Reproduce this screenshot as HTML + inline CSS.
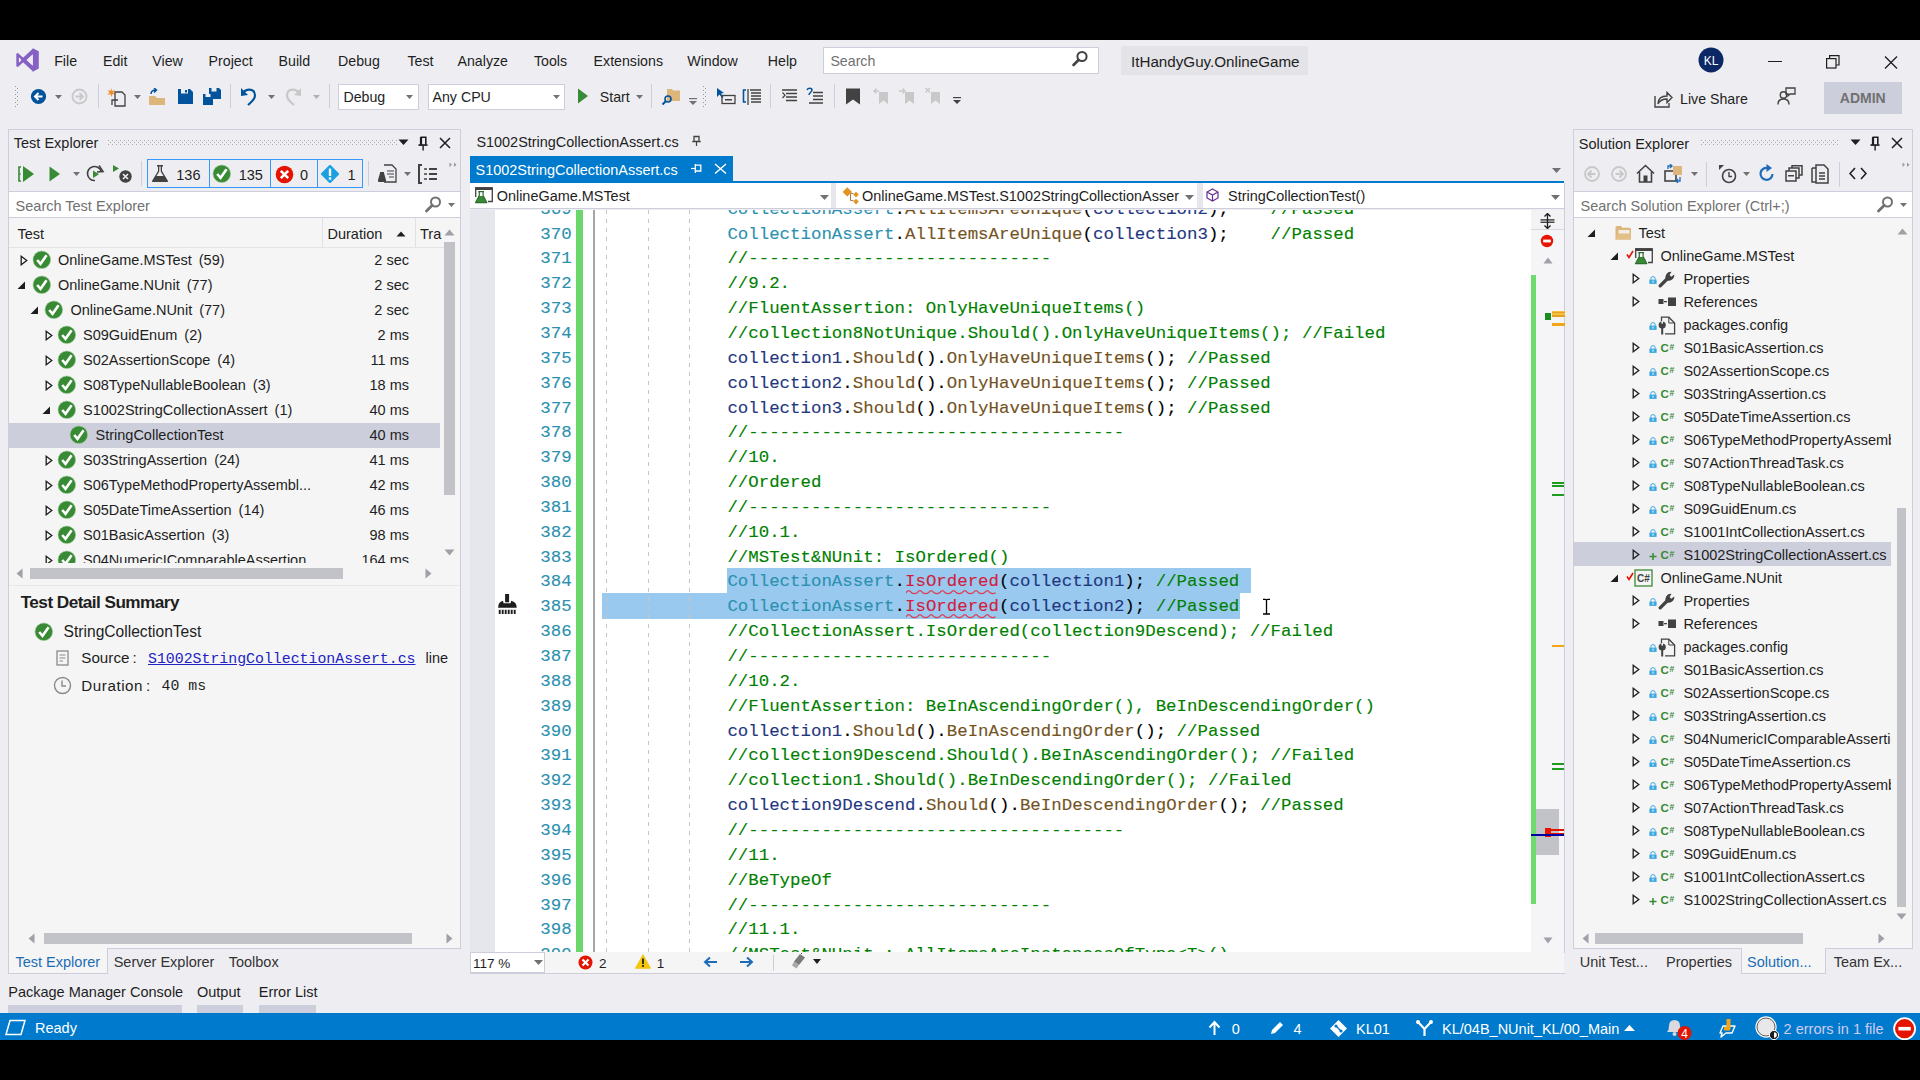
<!DOCTYPE html><html><head><meta charset="utf-8"><style>
html,body{margin:0;padding:0;width:1920px;height:1080px;overflow:hidden;background:#000}
body>div,body>svg{position:absolute}
.t{position:absolute;white-space:pre}
</style></head><body>
<div style="left:0px;top:0px;width:1920px;height:40px;background:#000;"></div>
<div style="left:0px;top:40px;width:1920px;height:973px;background:#EEEEF2;"></div>
<div style="left:0px;top:1013px;width:1920px;height:27px;background:#007ACC;"></div>
<div style="left:0px;top:1040px;width:1920px;height:40px;background:#000;"></div>
<svg style="position:absolute;left:8px;top:42px;" width="40" height="36" viewBox="0 0 40 36"><path d="M24.7 6.2 L30.8 9.2 V26.6 L24.7 29.8 Z" fill="#8661C5"/><path d="M26.5 8.2 L15.8 18 L26.5 27.8" fill="none" stroke="#8661C5" stroke-width="4.3"/><path d="M9.6 12.4 V23.6 L15.8 18 Z" fill="none" stroke="#8661C5" stroke-width="2.6" stroke-linejoin="round"/><path d="M24.8 12.2 V23.8 L18.5 18 Z" fill="#EEEEF2"/></svg>
<div class="t" style="left:54.2px;top:53.78px;font-size:14.2px;line-height:14.2px;color:#1E1E1E;font-family:'Liberation Sans', sans-serif;">File</div>
<div class="t" style="left:103px;top:53.78px;font-size:14.2px;line-height:14.2px;color:#1E1E1E;font-family:'Liberation Sans', sans-serif;">Edit</div>
<div class="t" style="left:152.3px;top:53.78px;font-size:14.2px;line-height:14.2px;color:#1E1E1E;font-family:'Liberation Sans', sans-serif;">View</div>
<div class="t" style="left:208.6px;top:53.78px;font-size:14.2px;line-height:14.2px;color:#1E1E1E;font-family:'Liberation Sans', sans-serif;">Project</div>
<div class="t" style="left:278.6px;top:53.78px;font-size:14.2px;line-height:14.2px;color:#1E1E1E;font-family:'Liberation Sans', sans-serif;">Build</div>
<div class="t" style="left:338px;top:53.78px;font-size:14.2px;line-height:14.2px;color:#1E1E1E;font-family:'Liberation Sans', sans-serif;">Debug</div>
<div class="t" style="left:407.5px;top:53.78px;font-size:14.2px;line-height:14.2px;color:#1E1E1E;font-family:'Liberation Sans', sans-serif;">Test</div>
<div class="t" style="left:457.5px;top:53.78px;font-size:14.2px;line-height:14.2px;color:#1E1E1E;font-family:'Liberation Sans', sans-serif;">Analyze</div>
<div class="t" style="left:534px;top:53.78px;font-size:14.2px;line-height:14.2px;color:#1E1E1E;font-family:'Liberation Sans', sans-serif;">Tools</div>
<div class="t" style="left:593.6px;top:53.78px;font-size:14.2px;line-height:14.2px;color:#1E1E1E;font-family:'Liberation Sans', sans-serif;">Extensions</div>
<div class="t" style="left:687.3px;top:53.78px;font-size:14.2px;line-height:14.2px;color:#1E1E1E;font-family:'Liberation Sans', sans-serif;">Window</div>
<div class="t" style="left:767.8px;top:53.78px;font-size:14.2px;line-height:14.2px;color:#1E1E1E;font-family:'Liberation Sans', sans-serif;">Help</div>
<div style="left:823px;top:46.5px;width:276px;height:27px;background:#FFFFFF;border:1px solid #CCCEDB;box-sizing:border-box;"></div>
<div class="t" style="left:830.4px;top:53.78px;font-size:14.2px;line-height:14.2px;color:#717171;font-family:'Liberation Sans', sans-serif;">Search</div>
<svg style="position:absolute;left:1071px;top:50px;" width="18" height="18" viewBox="0 0 18 18"><circle cx="11" cy="6.5" r="4.6" fill="none" stroke="#424242" stroke-width="2"/><path d="M7.8 9.8 L2.5 15" stroke="#424242" stroke-width="2.6" stroke-linecap="round"/></svg>
<div style="left:1121px;top:46px;width:187px;height:29px;background:#E3E3E8;"></div>
<div class="t" style="left:1131px;top:54.43px;font-size:15.2px;line-height:15.2px;color:#1E1E1E;font-family:'Liberation Sans', sans-serif;">ItHandyGuy.OnlineGame</div>
<svg style="position:absolute;left:1698px;top:47px;" width="26" height="26" viewBox="0 0 26 26"><circle cx="13" cy="13" r="12.5" fill="#0B2765"/><text x="13" y="17.5" font-family="Liberation Sans" font-size="12" fill="#fff" text-anchor="middle">KL</text></svg>
<div style="left:1768px;top:60.5px;width:14px;height:1.3px;background:#1E1E1E;"></div>
<svg style="position:absolute;left:1826px;top:55px;" width="15" height="14" viewBox="0 0 15 14"><rect x="0.6" y="3.6" width="9.4" height="9.4" fill="none" stroke="#1E1E1E" stroke-width="1.2"/><path d="M3.6 3.6 V0.6 H13 V10 H10" fill="none" stroke="#1E1E1E" stroke-width="1.2"/></svg>
<svg style="position:absolute;left:1884px;top:56px;" width="14" height="13" viewBox="0 0 14 13"><path d="M1 0.5 L13 12.5 M13 0.5 L1 12.5" stroke="#1E1E1E" stroke-width="1.3"/></svg>
<svg style="position:absolute;left:15px;top:86px;" width="4" height="22" viewBox="0 0 4 22"><rect x="0" y="0" width="1" height="1" fill="#999"/><rect x="2" y="2" width="1" height="1" fill="#999"/><rect x="0" y="4" width="1" height="1" fill="#999"/><rect x="2" y="6" width="1" height="1" fill="#999"/><rect x="0" y="8" width="1" height="1" fill="#999"/><rect x="2" y="10" width="1" height="1" fill="#999"/><rect x="0" y="12" width="1" height="1" fill="#999"/><rect x="2" y="14" width="1" height="1" fill="#999"/><rect x="0" y="16" width="1" height="1" fill="#999"/><rect x="2" y="18" width="1" height="1" fill="#999"/><rect x="0" y="20" width="1" height="1" fill="#999"/><rect x="2" y="22" width="1" height="1" fill="#999"/></svg>
<svg style="position:absolute;left:30px;top:88px;" width="17" height="17" viewBox="0 0 17 17"><circle cx="8.5" cy="8.5" r="7.6" fill="#00539C"/><path d="M12.5 8.5 H5.5 M8.5 5 L5 8.5 L8.5 12" fill="none" stroke="#fff" stroke-width="2"/></svg>
<svg style="position:absolute;left:55.1px;top:94.5px;" width="7" height="4" viewBox="0 0 7 4"><path d="M0 0 H7 L3.5 4 Z" fill="#717171"/></svg>
<svg style="position:absolute;left:71px;top:88px;" width="17" height="17" viewBox="0 0 17 17"><circle cx="8.5" cy="8.5" r="7" fill="none" stroke="#C8C8C8" stroke-width="1.8"/><path d="M4.5 8.5 H11.5 M8.5 5 L12 8.5 L8.5 12" fill="none" stroke="#C8C8C8" stroke-width="1.8"/></svg>
<div style="left:97.5px;top:84px;width:1px;height:24px;background:#CCCEDB;"></div>
<svg style="position:absolute;left:107px;top:87px;" width="20" height="20" viewBox="0 0 20 20"><path d="M4 1 L5 4 L8 3 L6 5.5 L8.5 7.5 L5.5 7 L4.5 10 L3.5 7 L0.5 8 L2.5 5.5 L0.5 3 L3.5 4 Z" fill="#F08A24"/><path d="M8 5 H15 L18 8 V19 H8 Z" fill="none" stroke="#424242" stroke-width="1.3"/><path d="M11 13 H5 V18" fill="none" stroke="#424242" stroke-width="1.3"/></svg>
<svg style="position:absolute;left:134.0px;top:94.5px;" width="7" height="4" viewBox="0 0 7 4"><path d="M0 0 H7 L3.5 4 Z" fill="#717171"/></svg>
<svg style="position:absolute;left:148px;top:88px;" width="19" height="18" viewBox="0 0 19 18"><path d="M1 8 H7 L9 10 H17 V17 H1 Z" fill="#DCB67A"/><path d="M3 6 C3 3 5 2 8 2 M6 0 L8.5 2 L6 4.5" fill="none" stroke="#00539C" stroke-width="1.5"/></svg>
<svg style="position:absolute;left:177px;top:88px;" width="17" height="17" viewBox="0 0 17 17"><path d="M1 1 H13 L16 4 V16 H1 Z" fill="#00539C"/><rect x="4" y="1" width="7" height="4.5" fill="#EEEEF2"/><rect x="8" y="2" width="2" height="2.5" fill="#00539C"/></svg>
<svg style="position:absolute;left:202px;top:87px;" width="20" height="19" viewBox="0 0 20 19"><path d="M7 1 H17 L19 3 V12 H7 Z" fill="#00539C"/><rect x="9.5" y="1" width="5" height="3.5" fill="#EEEEF2"/><path d="M1 7 H9 L11 9 V18 H1 Z" fill="#00539C"/><rect x="3.5" y="7" width="5" height="3" fill="#EEEEF2"/></svg>
<div style="left:230px;top:84px;width:1px;height:24px;background:#CCCEDB;"></div>
<svg style="position:absolute;left:240px;top:87px;" width="18" height="19" viewBox="0 0 18 19"><path d="M4 4.5 C8 1.5 15 2 15 8.5 C15 13 11 15 8 18" fill="none" stroke="#00539C" stroke-width="2.2"/><path d="M1 1 L1 9 L8 8 Z" fill="#00539C"/></svg>
<svg style="position:absolute;left:268.0px;top:94.5px;" width="7" height="4" viewBox="0 0 7 4"><path d="M0 0 H7 L3.5 4 Z" fill="#717171"/></svg>
<svg style="position:absolute;left:284px;top:87px;" width="18" height="19" viewBox="0 0 18 19"><path d="M14 4.5 C10 1.5 3 2 3 8.5 C3 13 7 15 10 18" fill="none" stroke="#C8C8C8" stroke-width="2.2"/><path d="M17 1 L17 9 L10 8 Z" fill="#C8C8C8"/></svg>
<svg style="position:absolute;left:313.0px;top:94.5px;" width="7" height="4" viewBox="0 0 7 4"><path d="M0 0 H7 L3.5 4 Z" fill="#B0B0B0"/></svg>
<div style="left:328.5px;top:84px;width:1px;height:24px;background:#CCCEDB;"></div>
<div style="left:338px;top:83.5px;width:81px;height:26px;background:#FFFFFF;border:1px solid #CCCEDB;box-sizing:border-box;"></div>
<div class="t" style="left:343.4px;top:89.68px;font-size:14.2px;line-height:14.2px;color:#1E1E1E;font-family:'Liberation Sans', sans-serif;">Debug</div>
<svg style="position:absolute;left:406.3px;top:94.5px;" width="7" height="4" viewBox="0 0 7 4"><path d="M0 0 H7 L3.5 4 Z" fill="#717171"/></svg>
<div style="left:427.5px;top:83.5px;width:137.5px;height:26px;background:#FFFFFF;border:1px solid #CCCEDB;box-sizing:border-box;"></div>
<div class="t" style="left:432.5px;top:89.68px;font-size:14.2px;line-height:14.2px;color:#1E1E1E;font-family:'Liberation Sans', sans-serif;">Any CPU</div>
<svg style="position:absolute;left:552.5px;top:94.5px;" width="7" height="4" viewBox="0 0 7 4"><path d="M0 0 H7 L3.5 4 Z" fill="#717171"/></svg>
<svg style="position:absolute;left:577px;top:88px;" width="12" height="16" viewBox="0 0 12 16"><path d="M1 0.5 L11 8 L1 15.5 Z" fill="#388A34"/></svg>
<div class="t" style="left:599.8px;top:89.68px;font-size:14.2px;line-height:14.2px;color:#1E1E1E;font-family:'Liberation Sans', sans-serif;">Start</div>
<svg style="position:absolute;left:636.2px;top:94.5px;" width="7" height="4" viewBox="0 0 7 4"><path d="M0 0 H7 L3.5 4 Z" fill="#717171"/></svg>
<div style="left:651.3px;top:84px;width:1px;height:24px;background:#CCCEDB;"></div>
<svg style="position:absolute;left:661px;top:87px;" width="20" height="19" viewBox="0 0 20 19"><path d="M6 2 H11 L12 3.5 H19 V14 H6 Z" fill="#DCB67A"/><circle cx="7" cy="12" r="3" fill="none" stroke="#00539C" stroke-width="1.6"/><path d="M5 14 L1.5 17.5" stroke="#00539C" stroke-width="2"/></svg>
<svg style="position:absolute;left:688px;top:98px;" width="10" height="10" viewBox="0 0 10 10"><rect x="1" y="0" width="8" height="1.2" fill="#717171"/><path d="M1 3 H9 L5 7 Z" fill="#717171"/></svg>
<svg style="position:absolute;left:703px;top:86px;" width="4" height="22" viewBox="0 0 4 22"><rect x="0" y="0" width="1" height="1" fill="#999"/><rect x="2" y="2" width="1" height="1" fill="#999"/><rect x="0" y="4" width="1" height="1" fill="#999"/><rect x="2" y="6" width="1" height="1" fill="#999"/><rect x="0" y="8" width="1" height="1" fill="#999"/><rect x="2" y="10" width="1" height="1" fill="#999"/><rect x="0" y="12" width="1" height="1" fill="#999"/><rect x="2" y="14" width="1" height="1" fill="#999"/><rect x="0" y="16" width="1" height="1" fill="#999"/><rect x="2" y="18" width="1" height="1" fill="#999"/><rect x="0" y="20" width="1" height="1" fill="#999"/><rect x="2" y="22" width="1" height="1" fill="#999"/></svg>
<svg style="position:absolute;left:716px;top:87px;" width="20" height="19" viewBox="0 0 20 19"><path d="M1 1 L1 10 L3.5 7.5 L6 11 L7.5 10 L5 6.5 L8 6 Z" fill="#00539C"/><rect x="6" y="8.5" width="13" height="8" fill="none" stroke="#424242" stroke-width="1.3"/><rect x="9" y="12" width="7" height="1.5" fill="#424242"/></svg>
<svg style="position:absolute;left:742px;top:87px;" width="20" height="19" viewBox="0 0 20 19"><path d="M4 3 H1.5 V15 H4" fill="none" stroke="#00539C" stroke-width="1.6"/><path d="M6 2 V18" stroke="#424242" stroke-width="1.3"/><path d="M8 3 H19 M9 6 H19 M9 9 H19 M9 12 H19 M9 15 H19" stroke="#424242" stroke-width="1.3"/></svg>
<div style="left:770px;top:84px;width:1px;height:24px;background:#CCCEDB;"></div>
<svg style="position:absolute;left:782px;top:88px;" width="16" height="16" viewBox="0 0 16 16"><path d="M0 2 H15 M4 5.5 H15 M4 9 H15 M4 12.5 H15" stroke="#424242" stroke-width="1.4"/><path d="M0.5 4.5 L3 7.2 L0.5 10" fill="none" stroke="#424242" stroke-width="1.2"/></svg>
<svg style="position:absolute;left:806px;top:87px;" width="18" height="18" viewBox="0 0 18 18"><path d="M7 5.5 H17 M7 9 H17 M7 12.5 H17 M3 16 H17" stroke="#424242" stroke-width="1.4"/><path d="M1 3 C2 0.5 6 0.5 6 3 C6 5 3 5.5 3 8" fill="none" stroke="#00539C" stroke-width="1.5"/></svg>
<div style="left:834px;top:84px;width:1px;height:24px;background:#CCCEDB;"></div>
<svg style="position:absolute;left:845px;top:88px;" width="16" height="17" viewBox="0 0 16 17"><path d="M1 0.5 H15 V16.5 L8 11.5 L1 16.5 Z" fill="#424242"/></svg>
<svg style="position:absolute;left:873px;top:87px;" width="16" height="18" viewBox="0 0 16 18"><path d="M6 5 H15 V17 L10.5 13.5 L6 17 Z" fill="#C8C8C8"/><path d="M1 4 H6 M3.5 1.5 L1 4 L3.5 6.5" fill="none" stroke="#C8C8C8" stroke-width="1.4"/></svg>
<svg style="position:absolute;left:899px;top:87px;" width="17" height="18" viewBox="0 0 17 18"><path d="M6 5 H15 V17 L10.5 13.5 L6 17 Z" fill="#C8C8C8"/><path d="M0 4 H6 M3.5 1.5 L6 4 L3.5 6.5" fill="none" stroke="#C8C8C8" stroke-width="1.4"/></svg>
<svg style="position:absolute;left:925px;top:87px;" width="17" height="18" viewBox="0 0 17 18"><path d="M6 5 H15 V17 L10.5 13.5 L6 17 Z" fill="#C8C8C8"/><path d="M0.5 1 L5 5.5 M5 1 L0.5 5.5" fill="none" stroke="#C8C8C8" stroke-width="1.4"/></svg>
<svg style="position:absolute;left:952px;top:97px;" width="10" height="10" viewBox="0 0 10 10"><rect x="1" y="0" width="8" height="1.2" fill="#424242"/><path d="M1 3 H9 L5 7 Z" fill="#424242"/></svg>
<svg style="position:absolute;left:1654px;top:90px;" width="19" height="18" viewBox="0 0 19 18"><path d="M1 6 V17 H15 V13" fill="none" stroke="#424242" stroke-width="1.4"/><path d="M4 14 C4 8 8 6 13 6 V2.5 L18 7.5 L13 12.5 V9 C9 9 6 10 4 14 Z" fill="none" stroke="#424242" stroke-width="1.4"/></svg>
<div class="t" style="left:1680px;top:91.68px;font-size:14.2px;line-height:14.2px;color:#1E1E1E;font-family:'Liberation Sans', sans-serif;">Live Share</div>
<svg style="position:absolute;left:1777px;top:87px;" width="19" height="19" viewBox="0 0 19 19"><circle cx="6.5" cy="8" r="3.2" fill="none" stroke="#424242" stroke-width="1.4"/><path d="M1 17.5 C1 13 4 12 6.5 12 C9 12 12 13 12 17.5" fill="none" stroke="#424242" stroke-width="1.4"/><path d="M9 1 H18 V7 H13 L11 9 V7 H9 Z" fill="none" stroke="#424242" stroke-width="1.3"/></svg>
<div style="left:1824px;top:82.3px;width:78px;height:31.3px;background:#CCCEDB;"></div>
<div class="t" style="left:1839.8px;top:91.35px;font-size:14px;line-height:14px;color:#717171;font-family:'Liberation Sans', sans-serif;font-weight:bold">ADMIN</div>
<div style="left:8px;top:129px;width:453px;height:820px;background:#F5F5F5;border:1px solid #CCCEDB;box-sizing:border-box;"></div>
<div style="left:9px;top:130px;width:451px;height:61px;background:#EEEEF2;"></div>
<div class="t" style="left:13.8px;top:136.43px;font-size:14.5px;line-height:14.5px;color:#1E1E1E;font-family:'Liberation Sans', sans-serif;">Test Explorer</div>
<svg style="position:absolute;left:107.5px;top:140px;" width="290" height="5" viewBox="0 0 290 5"><rect x="0" y="0" width="1" height="1" fill="#A8A8B0"/><rect x="2" y="2" width="1" height="1" fill="#A8A8B0"/><rect x="0" y="4" width="1" height="1" fill="#A8A8B0"/><rect x="4" y="0" width="1" height="1" fill="#A8A8B0"/><rect x="6" y="2" width="1" height="1" fill="#A8A8B0"/><rect x="4" y="4" width="1" height="1" fill="#A8A8B0"/><rect x="8" y="0" width="1" height="1" fill="#A8A8B0"/><rect x="10" y="2" width="1" height="1" fill="#A8A8B0"/><rect x="8" y="4" width="1" height="1" fill="#A8A8B0"/><rect x="12" y="0" width="1" height="1" fill="#A8A8B0"/><rect x="14" y="2" width="1" height="1" fill="#A8A8B0"/><rect x="12" y="4" width="1" height="1" fill="#A8A8B0"/><rect x="16" y="0" width="1" height="1" fill="#A8A8B0"/><rect x="18" y="2" width="1" height="1" fill="#A8A8B0"/><rect x="16" y="4" width="1" height="1" fill="#A8A8B0"/><rect x="20" y="0" width="1" height="1" fill="#A8A8B0"/><rect x="22" y="2" width="1" height="1" fill="#A8A8B0"/><rect x="20" y="4" width="1" height="1" fill="#A8A8B0"/><rect x="24" y="0" width="1" height="1" fill="#A8A8B0"/><rect x="26" y="2" width="1" height="1" fill="#A8A8B0"/><rect x="24" y="4" width="1" height="1" fill="#A8A8B0"/><rect x="28" y="0" width="1" height="1" fill="#A8A8B0"/><rect x="30" y="2" width="1" height="1" fill="#A8A8B0"/><rect x="28" y="4" width="1" height="1" fill="#A8A8B0"/><rect x="32" y="0" width="1" height="1" fill="#A8A8B0"/><rect x="34" y="2" width="1" height="1" fill="#A8A8B0"/><rect x="32" y="4" width="1" height="1" fill="#A8A8B0"/><rect x="36" y="0" width="1" height="1" fill="#A8A8B0"/><rect x="38" y="2" width="1" height="1" fill="#A8A8B0"/><rect x="36" y="4" width="1" height="1" fill="#A8A8B0"/><rect x="40" y="0" width="1" height="1" fill="#A8A8B0"/><rect x="42" y="2" width="1" height="1" fill="#A8A8B0"/><rect x="40" y="4" width="1" height="1" fill="#A8A8B0"/><rect x="44" y="0" width="1" height="1" fill="#A8A8B0"/><rect x="46" y="2" width="1" height="1" fill="#A8A8B0"/><rect x="44" y="4" width="1" height="1" fill="#A8A8B0"/><rect x="48" y="0" width="1" height="1" fill="#A8A8B0"/><rect x="50" y="2" width="1" height="1" fill="#A8A8B0"/><rect x="48" y="4" width="1" height="1" fill="#A8A8B0"/><rect x="52" y="0" width="1" height="1" fill="#A8A8B0"/><rect x="54" y="2" width="1" height="1" fill="#A8A8B0"/><rect x="52" y="4" width="1" height="1" fill="#A8A8B0"/><rect x="56" y="0" width="1" height="1" fill="#A8A8B0"/><rect x="58" y="2" width="1" height="1" fill="#A8A8B0"/><rect x="56" y="4" width="1" height="1" fill="#A8A8B0"/><rect x="60" y="0" width="1" height="1" fill="#A8A8B0"/><rect x="62" y="2" width="1" height="1" fill="#A8A8B0"/><rect x="60" y="4" width="1" height="1" fill="#A8A8B0"/><rect x="64" y="0" width="1" height="1" fill="#A8A8B0"/><rect x="66" y="2" width="1" height="1" fill="#A8A8B0"/><rect x="64" y="4" width="1" height="1" fill="#A8A8B0"/><rect x="68" y="0" width="1" height="1" fill="#A8A8B0"/><rect x="70" y="2" width="1" height="1" fill="#A8A8B0"/><rect x="68" y="4" width="1" height="1" fill="#A8A8B0"/><rect x="72" y="0" width="1" height="1" fill="#A8A8B0"/><rect x="74" y="2" width="1" height="1" fill="#A8A8B0"/><rect x="72" y="4" width="1" height="1" fill="#A8A8B0"/><rect x="76" y="0" width="1" height="1" fill="#A8A8B0"/><rect x="78" y="2" width="1" height="1" fill="#A8A8B0"/><rect x="76" y="4" width="1" height="1" fill="#A8A8B0"/><rect x="80" y="0" width="1" height="1" fill="#A8A8B0"/><rect x="82" y="2" width="1" height="1" fill="#A8A8B0"/><rect x="80" y="4" width="1" height="1" fill="#A8A8B0"/><rect x="84" y="0" width="1" height="1" fill="#A8A8B0"/><rect x="86" y="2" width="1" height="1" fill="#A8A8B0"/><rect x="84" y="4" width="1" height="1" fill="#A8A8B0"/><rect x="88" y="0" width="1" height="1" fill="#A8A8B0"/><rect x="90" y="2" width="1" height="1" fill="#A8A8B0"/><rect x="88" y="4" width="1" height="1" fill="#A8A8B0"/><rect x="92" y="0" width="1" height="1" fill="#A8A8B0"/><rect x="94" y="2" width="1" height="1" fill="#A8A8B0"/><rect x="92" y="4" width="1" height="1" fill="#A8A8B0"/><rect x="96" y="0" width="1" height="1" fill="#A8A8B0"/><rect x="98" y="2" width="1" height="1" fill="#A8A8B0"/><rect x="96" y="4" width="1" height="1" fill="#A8A8B0"/><rect x="100" y="0" width="1" height="1" fill="#A8A8B0"/><rect x="102" y="2" width="1" height="1" fill="#A8A8B0"/><rect x="100" y="4" width="1" height="1" fill="#A8A8B0"/><rect x="104" y="0" width="1" height="1" fill="#A8A8B0"/><rect x="106" y="2" width="1" height="1" fill="#A8A8B0"/><rect x="104" y="4" width="1" height="1" fill="#A8A8B0"/><rect x="108" y="0" width="1" height="1" fill="#A8A8B0"/><rect x="110" y="2" width="1" height="1" fill="#A8A8B0"/><rect x="108" y="4" width="1" height="1" fill="#A8A8B0"/><rect x="112" y="0" width="1" height="1" fill="#A8A8B0"/><rect x="114" y="2" width="1" height="1" fill="#A8A8B0"/><rect x="112" y="4" width="1" height="1" fill="#A8A8B0"/><rect x="116" y="0" width="1" height="1" fill="#A8A8B0"/><rect x="118" y="2" width="1" height="1" fill="#A8A8B0"/><rect x="116" y="4" width="1" height="1" fill="#A8A8B0"/><rect x="120" y="0" width="1" height="1" fill="#A8A8B0"/><rect x="122" y="2" width="1" height="1" fill="#A8A8B0"/><rect x="120" y="4" width="1" height="1" fill="#A8A8B0"/><rect x="124" y="0" width="1" height="1" fill="#A8A8B0"/><rect x="126" y="2" width="1" height="1" fill="#A8A8B0"/><rect x="124" y="4" width="1" height="1" fill="#A8A8B0"/><rect x="128" y="0" width="1" height="1" fill="#A8A8B0"/><rect x="130" y="2" width="1" height="1" fill="#A8A8B0"/><rect x="128" y="4" width="1" height="1" fill="#A8A8B0"/><rect x="132" y="0" width="1" height="1" fill="#A8A8B0"/><rect x="134" y="2" width="1" height="1" fill="#A8A8B0"/><rect x="132" y="4" width="1" height="1" fill="#A8A8B0"/><rect x="136" y="0" width="1" height="1" fill="#A8A8B0"/><rect x="138" y="2" width="1" height="1" fill="#A8A8B0"/><rect x="136" y="4" width="1" height="1" fill="#A8A8B0"/><rect x="140" y="0" width="1" height="1" fill="#A8A8B0"/><rect x="142" y="2" width="1" height="1" fill="#A8A8B0"/><rect x="140" y="4" width="1" height="1" fill="#A8A8B0"/><rect x="144" y="0" width="1" height="1" fill="#A8A8B0"/><rect x="146" y="2" width="1" height="1" fill="#A8A8B0"/><rect x="144" y="4" width="1" height="1" fill="#A8A8B0"/><rect x="148" y="0" width="1" height="1" fill="#A8A8B0"/><rect x="150" y="2" width="1" height="1" fill="#A8A8B0"/><rect x="148" y="4" width="1" height="1" fill="#A8A8B0"/><rect x="152" y="0" width="1" height="1" fill="#A8A8B0"/><rect x="154" y="2" width="1" height="1" fill="#A8A8B0"/><rect x="152" y="4" width="1" height="1" fill="#A8A8B0"/><rect x="156" y="0" width="1" height="1" fill="#A8A8B0"/><rect x="158" y="2" width="1" height="1" fill="#A8A8B0"/><rect x="156" y="4" width="1" height="1" fill="#A8A8B0"/><rect x="160" y="0" width="1" height="1" fill="#A8A8B0"/><rect x="162" y="2" width="1" height="1" fill="#A8A8B0"/><rect x="160" y="4" width="1" height="1" fill="#A8A8B0"/><rect x="164" y="0" width="1" height="1" fill="#A8A8B0"/><rect x="166" y="2" width="1" height="1" fill="#A8A8B0"/><rect x="164" y="4" width="1" height="1" fill="#A8A8B0"/><rect x="168" y="0" width="1" height="1" fill="#A8A8B0"/><rect x="170" y="2" width="1" height="1" fill="#A8A8B0"/><rect x="168" y="4" width="1" height="1" fill="#A8A8B0"/><rect x="172" y="0" width="1" height="1" fill="#A8A8B0"/><rect x="174" y="2" width="1" height="1" fill="#A8A8B0"/><rect x="172" y="4" width="1" height="1" fill="#A8A8B0"/><rect x="176" y="0" width="1" height="1" fill="#A8A8B0"/><rect x="178" y="2" width="1" height="1" fill="#A8A8B0"/><rect x="176" y="4" width="1" height="1" fill="#A8A8B0"/><rect x="180" y="0" width="1" height="1" fill="#A8A8B0"/><rect x="182" y="2" width="1" height="1" fill="#A8A8B0"/><rect x="180" y="4" width="1" height="1" fill="#A8A8B0"/><rect x="184" y="0" width="1" height="1" fill="#A8A8B0"/><rect x="186" y="2" width="1" height="1" fill="#A8A8B0"/><rect x="184" y="4" width="1" height="1" fill="#A8A8B0"/><rect x="188" y="0" width="1" height="1" fill="#A8A8B0"/><rect x="190" y="2" width="1" height="1" fill="#A8A8B0"/><rect x="188" y="4" width="1" height="1" fill="#A8A8B0"/><rect x="192" y="0" width="1" height="1" fill="#A8A8B0"/><rect x="194" y="2" width="1" height="1" fill="#A8A8B0"/><rect x="192" y="4" width="1" height="1" fill="#A8A8B0"/><rect x="196" y="0" width="1" height="1" fill="#A8A8B0"/><rect x="198" y="2" width="1" height="1" fill="#A8A8B0"/><rect x="196" y="4" width="1" height="1" fill="#A8A8B0"/><rect x="200" y="0" width="1" height="1" fill="#A8A8B0"/><rect x="202" y="2" width="1" height="1" fill="#A8A8B0"/><rect x="200" y="4" width="1" height="1" fill="#A8A8B0"/><rect x="204" y="0" width="1" height="1" fill="#A8A8B0"/><rect x="206" y="2" width="1" height="1" fill="#A8A8B0"/><rect x="204" y="4" width="1" height="1" fill="#A8A8B0"/><rect x="208" y="0" width="1" height="1" fill="#A8A8B0"/><rect x="210" y="2" width="1" height="1" fill="#A8A8B0"/><rect x="208" y="4" width="1" height="1" fill="#A8A8B0"/><rect x="212" y="0" width="1" height="1" fill="#A8A8B0"/><rect x="214" y="2" width="1" height="1" fill="#A8A8B0"/><rect x="212" y="4" width="1" height="1" fill="#A8A8B0"/><rect x="216" y="0" width="1" height="1" fill="#A8A8B0"/><rect x="218" y="2" width="1" height="1" fill="#A8A8B0"/><rect x="216" y="4" width="1" height="1" fill="#A8A8B0"/><rect x="220" y="0" width="1" height="1" fill="#A8A8B0"/><rect x="222" y="2" width="1" height="1" fill="#A8A8B0"/><rect x="220" y="4" width="1" height="1" fill="#A8A8B0"/><rect x="224" y="0" width="1" height="1" fill="#A8A8B0"/><rect x="226" y="2" width="1" height="1" fill="#A8A8B0"/><rect x="224" y="4" width="1" height="1" fill="#A8A8B0"/><rect x="228" y="0" width="1" height="1" fill="#A8A8B0"/><rect x="230" y="2" width="1" height="1" fill="#A8A8B0"/><rect x="228" y="4" width="1" height="1" fill="#A8A8B0"/><rect x="232" y="0" width="1" height="1" fill="#A8A8B0"/><rect x="234" y="2" width="1" height="1" fill="#A8A8B0"/><rect x="232" y="4" width="1" height="1" fill="#A8A8B0"/><rect x="236" y="0" width="1" height="1" fill="#A8A8B0"/><rect x="238" y="2" width="1" height="1" fill="#A8A8B0"/><rect x="236" y="4" width="1" height="1" fill="#A8A8B0"/><rect x="240" y="0" width="1" height="1" fill="#A8A8B0"/><rect x="242" y="2" width="1" height="1" fill="#A8A8B0"/><rect x="240" y="4" width="1" height="1" fill="#A8A8B0"/><rect x="244" y="0" width="1" height="1" fill="#A8A8B0"/><rect x="246" y="2" width="1" height="1" fill="#A8A8B0"/><rect x="244" y="4" width="1" height="1" fill="#A8A8B0"/><rect x="248" y="0" width="1" height="1" fill="#A8A8B0"/><rect x="250" y="2" width="1" height="1" fill="#A8A8B0"/><rect x="248" y="4" width="1" height="1" fill="#A8A8B0"/><rect x="252" y="0" width="1" height="1" fill="#A8A8B0"/><rect x="254" y="2" width="1" height="1" fill="#A8A8B0"/><rect x="252" y="4" width="1" height="1" fill="#A8A8B0"/><rect x="256" y="0" width="1" height="1" fill="#A8A8B0"/><rect x="258" y="2" width="1" height="1" fill="#A8A8B0"/><rect x="256" y="4" width="1" height="1" fill="#A8A8B0"/><rect x="260" y="0" width="1" height="1" fill="#A8A8B0"/><rect x="262" y="2" width="1" height="1" fill="#A8A8B0"/><rect x="260" y="4" width="1" height="1" fill="#A8A8B0"/><rect x="264" y="0" width="1" height="1" fill="#A8A8B0"/><rect x="266" y="2" width="1" height="1" fill="#A8A8B0"/><rect x="264" y="4" width="1" height="1" fill="#A8A8B0"/><rect x="268" y="0" width="1" height="1" fill="#A8A8B0"/><rect x="270" y="2" width="1" height="1" fill="#A8A8B0"/><rect x="268" y="4" width="1" height="1" fill="#A8A8B0"/><rect x="272" y="0" width="1" height="1" fill="#A8A8B0"/><rect x="274" y="2" width="1" height="1" fill="#A8A8B0"/><rect x="272" y="4" width="1" height="1" fill="#A8A8B0"/><rect x="276" y="0" width="1" height="1" fill="#A8A8B0"/><rect x="278" y="2" width="1" height="1" fill="#A8A8B0"/><rect x="276" y="4" width="1" height="1" fill="#A8A8B0"/><rect x="280" y="0" width="1" height="1" fill="#A8A8B0"/><rect x="282" y="2" width="1" height="1" fill="#A8A8B0"/><rect x="280" y="4" width="1" height="1" fill="#A8A8B0"/><rect x="284" y="0" width="1" height="1" fill="#A8A8B0"/><rect x="286" y="2" width="1" height="1" fill="#A8A8B0"/><rect x="284" y="4" width="1" height="1" fill="#A8A8B0"/><rect x="288" y="0" width="1" height="1" fill="#A8A8B0"/><rect x="290" y="2" width="1" height="1" fill="#A8A8B0"/><rect x="288" y="4" width="1" height="1" fill="#A8A8B0"/></svg>
<svg style="position:absolute;left:398px;top:139px;" width="11" height="7" viewBox="0 0 11 7"><path d="M0.5 0.5 H10.5 L5.5 6 Z" fill="#1E1E1E"/></svg>
<svg style="position:absolute;left:418px;top:136px;" width="10" height="15" viewBox="0 0 10 15"><path d="M2.6 1.2 H7.8 V8.4" fill="none" stroke="#1E1E1E" stroke-width="1.6"/><rect x="1.9" y="1" width="2.2" height="8" fill="#1E1E1E"/><rect x="0.5" y="8.2" width="9" height="1.7" fill="#1E1E1E"/><rect x="4.4" y="9.5" width="1.4" height="5" fill="#1E1E1E"/></svg>
<svg style="position:absolute;left:439px;top:137px;" width="12" height="12" viewBox="0 0 12 12"><path d="M1 1 L11 11 M11 1 L1 11" stroke="#1E1E1E" stroke-width="1.5"/></svg>
<svg style="position:absolute;left:18px;top:165px;" width="17" height="18" viewBox="0 0 17 18"><path d="M5 1 L16 9 L5 17 Z" fill="#388A34"/><path d="M3 2 L1 2 L1 16 L3 16" fill="none" stroke="#388A34" stroke-width="1.6"/><path d="M1 9 H3" stroke="#388A34" stroke-width="1"/></svg>
<svg style="position:absolute;left:49px;top:166px;" width="12" height="16" viewBox="0 0 12 16"><path d="M0.5 0.5 L11 8 L0.5 15.5 Z" fill="#388A34"/></svg>
<svg style="position:absolute;left:72.5px;top:171.5px;" width="7" height="4" viewBox="0 0 7 4"><path d="M0 0 H7 L3.5 4 Z" fill="#717171"/></svg>
<svg style="position:absolute;left:86px;top:164px;" width="19" height="19" viewBox="0 0 19 19"><path d="M15 7 A7 7 0 1 0 9 16.5" fill="none" stroke="#424242" stroke-width="1.6"/><path d="M13 1.5 L17 7.5 L11 8" fill="none" stroke="#424242" stroke-width="1.6"/><path d="M7 6.5 L13 10.2 L7 14 Z" fill="#388A34"/></svg>
<svg style="position:absolute;left:112px;top:164px;" width="21" height="20" viewBox="0 0 21 20"><path d="M1 1 L7 4.5 L1 8 Z" fill="#388A34"/><circle cx="13.5" cy="12.5" r="6.2" fill="#424242"/><path d="M11 10 L16 15 M16 10 L11 15" stroke="#EEEEF2" stroke-width="1.6"/></svg>
<div style="left:141px;top:161px;width:1px;height:25px;background:#CCCEDB;"></div>
<div style="left:147px;top:159px;width:216px;height:29px;background:transparent;border:1px solid #3399FF;box-sizing:border-box;"></div>
<div style="left:208.5px;top:159px;width:1.3px;height:29px;background:#3399FF;"></div>
<div style="left:270px;top:159px;width:1.3px;height:29px;background:#3399FF;"></div>
<div style="left:316.5px;top:159px;width:1.3px;height:29px;background:#3399FF;"></div>
<svg style="position:absolute;left:151px;top:164px;" width="18" height="19" viewBox="0 0 18 19"><path d="M6 1 H12 V2.5 H11 V7 L17 17 Q17.5 18 16 18 H2 Q0.5 18 1 17 L7 7 V2.5 H6 Z" fill="#424242"/><path d="M8.3 2.5 V7.5 L5.5 12 H12.5 L9.7 7.5 V2.5 Z" fill="#EEEEF2"/></svg>
<div class="t" style="left:176.3px;top:167.73px;font-size:14.5px;line-height:14.5px;color:#1E1E1E;font-family:'Liberation Sans', sans-serif;">136</div>
<svg style="position:absolute;left:212.1px;top:164.0px;" width="19.6" height="19.6" viewBox="0 0 19.6 19.6"><circle cx="9.8" cy="9.8" r="8.8" fill="#388A34" stroke="#9ACB98" stroke-width="0.6"/><path d="M5.200000000000001 10.0 L8.5 13.8 L14.600000000000001 5.300000000000001" fill="none" stroke="#fff" stroke-width="2.6" stroke-linejoin="miter"/></svg>
<div class="t" style="left:238.7px;top:167.73px;font-size:14.5px;line-height:14.5px;color:#1E1E1E;font-family:'Liberation Sans', sans-serif;">135</div>
<svg style="position:absolute;left:274.5px;top:164.5px;" width="19" height="19" viewBox="0 0 19 19"><circle cx="9.5" cy="9.5" r="8.8" fill="#E51400"/><path d="M5.8 5.8 L13.2 13.2 M13.2 5.8 L5.8 13.2" stroke="#fff" stroke-width="2.6"/></svg>
<div class="t" style="left:300px;top:167.73px;font-size:14.5px;line-height:14.5px;color:#1E1E1E;font-family:'Liberation Sans', sans-serif;">0</div>
<svg style="position:absolute;left:321px;top:165px;" width="18" height="18" viewBox="0 0 18 18"><path d="M9 0.5 L17.5 9 L9 17.5 L0.5 9 Z" fill="#1BA1E2" stroke="#1BA1E2" stroke-linejoin="round" stroke-width="1.5"/><rect x="7.8" y="3.6" width="2.4" height="7.4" fill="#fff"/><rect x="7.8" y="12.3" width="2.4" height="2.4" fill="#fff"/></svg>
<div class="t" style="left:347.5px;top:167.73px;font-size:14.5px;line-height:14.5px;color:#1E1E1E;font-family:'Liberation Sans', sans-serif;">1</div>
<div style="left:367.5px;top:161px;width:1px;height:25px;background:#CCCEDB;"></div>
<svg style="position:absolute;left:377px;top:164px;" width="21" height="20" viewBox="0 0 21 20"><path d="M7 1 H15 L19 5 V18 H7" fill="none" stroke="#424242" stroke-width="1.3"/><path d="M10 7 H17 M10 10 H17 M12 13 H17" stroke="#424242" stroke-width="1.2"/><path d="M3 8 H7 V9 L9 16 Q9.5 18 8 18 H2 Q0.5 18 1 16 L3 9 Z" fill="#424242"/></svg>
<svg style="position:absolute;left:404.0px;top:171.5px;" width="7" height="4" viewBox="0 0 7 4"><path d="M0 0 H7 L3.5 4 Z" fill="#717171"/></svg>
<svg style="position:absolute;left:418px;top:164px;" width="20" height="20" viewBox="0 0 20 20"><path d="M4 1 H1 V19 H4" fill="none" stroke="#424242" stroke-width="2"/><path d="M6 5 H9 M6 10 H9 M6 15 H9" stroke="#424242" stroke-width="1.6"/><path d="M11 5 H19 M11 10 H19 M11 15 H19" stroke="#424242" stroke-width="1.8"/></svg>
<svg style="position:absolute;left:448.5px;top:162px;" width="9" height="6" viewBox="0 0 9 6"><path d="M0.5 0.5 L3 2.75 L0.5 5 Z M5 0.5 L7.5 2.75 L5 5 Z" fill="#999999"/></svg>
<div style="left:9px;top:191px;width:451px;height:1px;background:#CCCEDB;"></div>
<div style="left:9px;top:192px;width:451px;height:25px;background:#FFFFFF;"></div>
<div style="left:9px;top:217px;width:451px;height:1px;background:#CCCEDB;"></div>
<div class="t" style="left:15.6px;top:199.03px;font-size:14.5px;line-height:14.5px;color:#717171;font-family:'Liberation Sans', sans-serif;">Search Test Explorer</div>
<svg style="position:absolute;left:424px;top:196px;" width="18" height="17" viewBox="0 0 18 17"><circle cx="11.5" cy="6" r="4.5" fill="none" stroke="#717171" stroke-width="2"/><path d="M8.3 9.3 L2.5 15" stroke="#717171" stroke-width="2.8" stroke-linecap="round"/></svg>
<svg style="position:absolute;left:448.0px;top:202.5px;" width="7" height="4" viewBox="0 0 7 4"><path d="M0 0 H7 L3.5 4 Z" fill="#717171"/></svg>
<div class="t" style="left:17.5px;top:227.13px;font-size:14.5px;line-height:14.5px;color:#1E1E1E;font-family:'Liberation Sans', sans-serif;">Test</div>
<div style="left:321.5px;top:218px;width:1px;height:29px;background:#E0E0E6;"></div>
<div class="t" style="left:327.5px;top:227.13px;font-size:14.5px;line-height:14.5px;color:#1E1E1E;font-family:'Liberation Sans', sans-serif;">Duration</div>
<svg style="position:absolute;left:395.5px;top:231px;" width="10" height="6" viewBox="0 0 10 6"><path d="M0.5 5.5 L5 0.5 L9.5 5.5 Z" fill="#1E1E1E"/></svg>
<div style="left:415px;top:218px;width:1px;height:29px;background:#E0E0E6;"></div>
<div class="t" style="left:420px;top:227.13px;font-size:14.5px;line-height:14.5px;color:#1E1E1E;font-family:'Liberation Sans', sans-serif;">Tra</div>
<div style="left:9px;top:247px;width:435px;height:1px;background:#E3E3E8;"></div>
<svg style="position:absolute;left:444px;top:229px;" width="11" height="7" viewBox="0 0 11 7"><path d="M0.5 6.5 L5.5 0.5 L10.5 6.5 Z" fill="#A0A0A8"/></svg>
<div style="left:444.2px;top:242px;width:10.8px;height:252.5px;background:#C2C3C9;"></div>
<svg style="position:absolute;left:444px;top:549px;" width="11" height="7" viewBox="0 0 11 7"><path d="M0.5 0.5 L5.5 6.5 L10.5 0.5 Z" fill="#A0A0A8"/></svg>
<div style="left:9px;top:248px;width:435px;height:315px;overflow:hidden">
<svg style="position:absolute;left:10.5px;top:6.5px" width="8" height="11"><path d="M1.2 1.2 L6.8 5.5 L1.2 9.8 Z" fill="none" stroke="#1E1E1E" stroke-width="1.3"/></svg>
<svg style="position:absolute;left:22.7px;top:2.1999999999999993px" width="19.6" height="19.6"><circle cx="9.8" cy="9.8" r="8.8" fill="#388A34" stroke="#9ACB98" stroke-width="0.6"/><path d="M5.200000000000001 10.0 L8.5 13.8 L14.600000000000001 5.300000000000001" fill="none" stroke="#fff" stroke-width="2.6"/></svg>
<div class="t" style="left:49.0px;top:5.33px;font-size:14.5px;line-height:14.5px;color:#1E1E1E;font-family:'Liberation Sans', sans-serif">OnlineGame.MSTest<span style="margin-left:7px">(59)</span></div>
<div class="t" style="left:300px;width:100px;text-align:right;top:5.33px;font-size:14.5px;line-height:14.5px;color:#1E1E1E;font-family:'Liberation Sans', sans-serif">2 sec</div>
<svg style="position:absolute;left:8.0px;top:33px" width="9" height="9"><path d="M8 0.5 V8 H0.5 Z" fill="#1E1E1E"/></svg>
<svg style="position:absolute;left:22.7px;top:27.2px" width="19.6" height="19.6"><circle cx="9.8" cy="9.8" r="8.8" fill="#388A34" stroke="#9ACB98" stroke-width="0.6"/><path d="M5.200000000000001 10.0 L8.5 13.8 L14.600000000000001 5.300000000000001" fill="none" stroke="#fff" stroke-width="2.6"/></svg>
<div class="t" style="left:49.0px;top:30.33px;font-size:14.5px;line-height:14.5px;color:#1E1E1E;font-family:'Liberation Sans', sans-serif">OnlineGame.NUnit<span style="margin-left:7px">(77)</span></div>
<div class="t" style="left:300px;width:100px;text-align:right;top:30.33px;font-size:14.5px;line-height:14.5px;color:#1E1E1E;font-family:'Liberation Sans', sans-serif">2 sec</div>
<svg style="position:absolute;left:20.5px;top:58px" width="9" height="9"><path d="M8 0.5 V8 H0.5 Z" fill="#1E1E1E"/></svg>
<svg style="position:absolute;left:35.2px;top:52.2px" width="19.6" height="19.6"><circle cx="9.8" cy="9.8" r="8.8" fill="#388A34" stroke="#9ACB98" stroke-width="0.6"/><path d="M5.200000000000001 10.0 L8.5 13.8 L14.600000000000001 5.300000000000001" fill="none" stroke="#fff" stroke-width="2.6"/></svg>
<div class="t" style="left:61.5px;top:55.33px;font-size:14.5px;line-height:14.5px;color:#1E1E1E;font-family:'Liberation Sans', sans-serif">OnlineGame.NUnit<span style="margin-left:7px">(77)</span></div>
<div class="t" style="left:300px;width:100px;text-align:right;top:55.33px;font-size:14.5px;line-height:14.5px;color:#1E1E1E;font-family:'Liberation Sans', sans-serif">2 sec</div>
<svg style="position:absolute;left:35.5px;top:81.5px" width="8" height="11"><path d="M1.2 1.2 L6.8 5.5 L1.2 9.8 Z" fill="none" stroke="#1E1E1E" stroke-width="1.3"/></svg>
<svg style="position:absolute;left:47.7px;top:77.2px" width="19.6" height="19.6"><circle cx="9.8" cy="9.8" r="8.8" fill="#388A34" stroke="#9ACB98" stroke-width="0.6"/><path d="M5.200000000000001 10.0 L8.5 13.8 L14.600000000000001 5.300000000000001" fill="none" stroke="#fff" stroke-width="2.6"/></svg>
<div class="t" style="left:74.0px;top:80.33px;font-size:14.5px;line-height:14.5px;color:#1E1E1E;font-family:'Liberation Sans', sans-serif">S09GuidEnum<span style="margin-left:7px">(2)</span></div>
<div class="t" style="left:300px;width:100px;text-align:right;top:80.33px;font-size:14.5px;line-height:14.5px;color:#1E1E1E;font-family:'Liberation Sans', sans-serif">2 ms</div>
<svg style="position:absolute;left:35.5px;top:106.5px" width="8" height="11"><path d="M1.2 1.2 L6.8 5.5 L1.2 9.8 Z" fill="none" stroke="#1E1E1E" stroke-width="1.3"/></svg>
<svg style="position:absolute;left:47.7px;top:102.2px" width="19.6" height="19.6"><circle cx="9.8" cy="9.8" r="8.8" fill="#388A34" stroke="#9ACB98" stroke-width="0.6"/><path d="M5.200000000000001 10.0 L8.5 13.8 L14.600000000000001 5.300000000000001" fill="none" stroke="#fff" stroke-width="2.6"/></svg>
<div class="t" style="left:74.0px;top:105.33px;font-size:14.5px;line-height:14.5px;color:#1E1E1E;font-family:'Liberation Sans', sans-serif">S02AssertionScope<span style="margin-left:7px">(4)</span></div>
<div class="t" style="left:300px;width:100px;text-align:right;top:105.33px;font-size:14.5px;line-height:14.5px;color:#1E1E1E;font-family:'Liberation Sans', sans-serif">11 ms</div>
<svg style="position:absolute;left:35.5px;top:131.5px" width="8" height="11"><path d="M1.2 1.2 L6.8 5.5 L1.2 9.8 Z" fill="none" stroke="#1E1E1E" stroke-width="1.3"/></svg>
<svg style="position:absolute;left:47.7px;top:127.2px" width="19.6" height="19.6"><circle cx="9.8" cy="9.8" r="8.8" fill="#388A34" stroke="#9ACB98" stroke-width="0.6"/><path d="M5.200000000000001 10.0 L8.5 13.8 L14.600000000000001 5.300000000000001" fill="none" stroke="#fff" stroke-width="2.6"/></svg>
<div class="t" style="left:74.0px;top:130.33px;font-size:14.5px;line-height:14.5px;color:#1E1E1E;font-family:'Liberation Sans', sans-serif">S08TypeNullableBoolean<span style="margin-left:7px">(3)</span></div>
<div class="t" style="left:300px;width:100px;text-align:right;top:130.33px;font-size:14.5px;line-height:14.5px;color:#1E1E1E;font-family:'Liberation Sans', sans-serif">18 ms</div>
<svg style="position:absolute;left:33.0px;top:158px" width="9" height="9"><path d="M8 0.5 V8 H0.5 Z" fill="#1E1E1E"/></svg>
<svg style="position:absolute;left:47.7px;top:152.2px" width="19.6" height="19.6"><circle cx="9.8" cy="9.8" r="8.8" fill="#388A34" stroke="#9ACB98" stroke-width="0.6"/><path d="M5.200000000000001 10.0 L8.5 13.8 L14.600000000000001 5.300000000000001" fill="none" stroke="#fff" stroke-width="2.6"/></svg>
<div class="t" style="left:74.0px;top:155.33px;font-size:14.5px;line-height:14.5px;color:#1E1E1E;font-family:'Liberation Sans', sans-serif">S1002StringCollectionAssert<span style="margin-left:7px">(1)</span></div>
<div class="t" style="left:300px;width:100px;text-align:right;top:155.33px;font-size:14.5px;line-height:14.5px;color:#1E1E1E;font-family:'Liberation Sans', sans-serif">40 ms</div>
<div style="left:0px;top:174.5px;width:431px;height:25px;background:#CCCEDB;position:absolute"></div>
<svg style="position:absolute;left:60.2px;top:177.2px" width="19.6" height="19.6"><circle cx="9.8" cy="9.8" r="8.8" fill="#388A34" stroke="#9ACB98" stroke-width="0.6"/><path d="M5.200000000000001 10.0 L8.5 13.8 L14.600000000000001 5.300000000000001" fill="none" stroke="#fff" stroke-width="2.6"/></svg>
<div class="t" style="left:86.5px;top:180.33px;font-size:14.5px;line-height:14.5px;color:#1E1E1E;font-family:'Liberation Sans', sans-serif">StringCollectionTest</div>
<div class="t" style="left:300px;width:100px;text-align:right;top:180.33px;font-size:14.5px;line-height:14.5px;color:#1E1E1E;font-family:'Liberation Sans', sans-serif">40 ms</div>
<svg style="position:absolute;left:35.5px;top:206.5px" width="8" height="11"><path d="M1.2 1.2 L6.8 5.5 L1.2 9.8 Z" fill="none" stroke="#1E1E1E" stroke-width="1.3"/></svg>
<svg style="position:absolute;left:47.7px;top:202.2px" width="19.6" height="19.6"><circle cx="9.8" cy="9.8" r="8.8" fill="#388A34" stroke="#9ACB98" stroke-width="0.6"/><path d="M5.200000000000001 10.0 L8.5 13.8 L14.600000000000001 5.300000000000001" fill="none" stroke="#fff" stroke-width="2.6"/></svg>
<div class="t" style="left:74.0px;top:205.33px;font-size:14.5px;line-height:14.5px;color:#1E1E1E;font-family:'Liberation Sans', sans-serif">S03StringAssertion<span style="margin-left:7px">(24)</span></div>
<div class="t" style="left:300px;width:100px;text-align:right;top:205.33px;font-size:14.5px;line-height:14.5px;color:#1E1E1E;font-family:'Liberation Sans', sans-serif">41 ms</div>
<svg style="position:absolute;left:35.5px;top:231.5px" width="8" height="11"><path d="M1.2 1.2 L6.8 5.5 L1.2 9.8 Z" fill="none" stroke="#1E1E1E" stroke-width="1.3"/></svg>
<svg style="position:absolute;left:47.7px;top:227.2px" width="19.6" height="19.6"><circle cx="9.8" cy="9.8" r="8.8" fill="#388A34" stroke="#9ACB98" stroke-width="0.6"/><path d="M5.200000000000001 10.0 L8.5 13.8 L14.600000000000001 5.300000000000001" fill="none" stroke="#fff" stroke-width="2.6"/></svg>
<div class="t" style="left:74.0px;top:230.33px;font-size:14.5px;line-height:14.5px;color:#1E1E1E;font-family:'Liberation Sans', sans-serif">S06TypeMethodPropertyAssembl...</div>
<div class="t" style="left:300px;width:100px;text-align:right;top:230.33px;font-size:14.5px;line-height:14.5px;color:#1E1E1E;font-family:'Liberation Sans', sans-serif">42 ms</div>
<svg style="position:absolute;left:35.5px;top:256.5px" width="8" height="11"><path d="M1.2 1.2 L6.8 5.5 L1.2 9.8 Z" fill="none" stroke="#1E1E1E" stroke-width="1.3"/></svg>
<svg style="position:absolute;left:47.7px;top:252.2px" width="19.6" height="19.6"><circle cx="9.8" cy="9.8" r="8.8" fill="#388A34" stroke="#9ACB98" stroke-width="0.6"/><path d="M5.200000000000001 10.0 L8.5 13.8 L14.600000000000001 5.300000000000001" fill="none" stroke="#fff" stroke-width="2.6"/></svg>
<div class="t" style="left:74.0px;top:255.33px;font-size:14.5px;line-height:14.5px;color:#1E1E1E;font-family:'Liberation Sans', sans-serif">S05DateTimeAssertion<span style="margin-left:7px">(14)</span></div>
<div class="t" style="left:300px;width:100px;text-align:right;top:255.33px;font-size:14.5px;line-height:14.5px;color:#1E1E1E;font-family:'Liberation Sans', sans-serif">46 ms</div>
<svg style="position:absolute;left:35.5px;top:281.5px" width="8" height="11"><path d="M1.2 1.2 L6.8 5.5 L1.2 9.8 Z" fill="none" stroke="#1E1E1E" stroke-width="1.3"/></svg>
<svg style="position:absolute;left:47.7px;top:277.2px" width="19.6" height="19.6"><circle cx="9.8" cy="9.8" r="8.8" fill="#388A34" stroke="#9ACB98" stroke-width="0.6"/><path d="M5.200000000000001 10.0 L8.5 13.8 L14.600000000000001 5.300000000000001" fill="none" stroke="#fff" stroke-width="2.6"/></svg>
<div class="t" style="left:74.0px;top:280.33px;font-size:14.5px;line-height:14.5px;color:#1E1E1E;font-family:'Liberation Sans', sans-serif">S01BasicAssertion<span style="margin-left:7px">(3)</span></div>
<div class="t" style="left:300px;width:100px;text-align:right;top:280.33px;font-size:14.5px;line-height:14.5px;color:#1E1E1E;font-family:'Liberation Sans', sans-serif">98 ms</div>
<svg style="position:absolute;left:35.5px;top:306.5px" width="8" height="11"><path d="M1.2 1.2 L6.8 5.5 L1.2 9.8 Z" fill="none" stroke="#1E1E1E" stroke-width="1.3"/></svg>
<svg style="position:absolute;left:47.7px;top:302.2px" width="19.6" height="19.6"><circle cx="9.8" cy="9.8" r="8.8" fill="#388A34" stroke="#9ACB98" stroke-width="0.6"/><path d="M5.200000000000001 10.0 L8.5 13.8 L14.600000000000001 5.300000000000001" fill="none" stroke="#fff" stroke-width="2.6"/></svg>
<div class="t" style="left:74.0px;top:305.33px;font-size:14.5px;line-height:14.5px;color:#1E1E1E;font-family:'Liberation Sans', sans-serif">S04NumericIComparableAssertion</div>
<div class="t" style="left:300px;width:100px;text-align:right;top:305.33px;font-size:14.5px;line-height:14.5px;color:#1E1E1E;font-family:'Liberation Sans', sans-serif">164 ms</div>
</div>
<svg style="position:absolute;left:16px;top:568px;" width="7" height="11" viewBox="0 0 7 11"><path d="M6.5 0.5 V10.5 L0.5 5.5 Z" fill="#A0A0A8"/></svg>
<div style="left:30px;top:568px;width:313px;height:11px;background:#C2C3C9;"></div>
<svg style="position:absolute;left:425px;top:568px;" width="7" height="11" viewBox="0 0 7 11"><path d="M0.5 0.5 V10.5 L6.5 5.5 Z" fill="#A0A0A8"/></svg>
<div style="left:9px;top:585px;width:451px;height:1px;background:#E8E8EC;"></div>
<div class="t" style="left:20.7px;top:593.84px;font-size:17.2px;line-height:17.2px;color:#1E1E1E;font-family:'Liberation Sans', sans-serif;font-weight:bold;letter-spacing:-0.55px">Test Detail Summary</div>
<svg style="position:absolute;left:34.2px;top:622.2px;" width="19.6" height="19.6" viewBox="0 0 19.6 19.6"><circle cx="9.8" cy="9.8" r="8.8" fill="#388A34" stroke="#9ACB98" stroke-width="0.6"/><path d="M5.200000000000001 10.0 L8.5 13.8 L14.600000000000001 5.300000000000001" fill="none" stroke="#fff" stroke-width="2.6" stroke-linejoin="miter"/></svg>
<div class="t" style="left:63.6px;top:623.79px;font-size:15.6px;line-height:15.6px;color:#1E1E1E;font-family:'Liberation Sans', sans-serif;">StringCollectionTest</div>
<svg style="position:absolute;left:56px;top:650px;" width="14" height="16" viewBox="0 0 14 16"><rect x="1" y="1" width="11" height="14" fill="none" stroke="#8A8A8A" stroke-width="1.3"/><path d="M3.5 5 H9.5 M3.5 8 H9.5 M3.5 11 H7" stroke="#8A8A8A" stroke-width="1.2"/></svg>
<div class="t" style="left:81.3px;top:650.13px;font-size:15.2px;line-height:15.2px;color:#1E1E1E;font-family:'Liberation Sans', sans-serif;">Source</div>
<div class="t" style="left:132.5px;top:650.13px;font-size:15.2px;line-height:15.2px;color:#1E1E1E;font-family:'Liberation Sans', sans-serif;">:</div>
<div class="t" style="left:148px;top:651.60px;font-size:14.87px;line-height:14.87px;color:#2222C4;font-family:'Liberation Mono', monospace;text-decoration:underline">S1002StringCollectionAssert.cs</div>
<div class="t" style="left:425.5px;top:650.73px;font-size:14.5px;line-height:14.5px;color:#1E1E1E;font-family:'Liberation Sans', sans-serif;">line</div>
<svg style="position:absolute;left:53px;top:676px;" width="19" height="19" viewBox="0 0 19 19"><circle cx="9.5" cy="9.5" r="8" fill="none" stroke="#8A8A8A" stroke-width="1.4"/><path d="M9 4.5 V10 H13" fill="none" stroke="#8A8A8A" stroke-width="1.4"/></svg>
<div class="t" style="left:81.3px;top:677.63px;font-size:15.2px;line-height:15.2px;color:#1E1E1E;font-family:'Liberation Sans', sans-serif;letter-spacing:0.55px">Duration</div>
<div class="t" style="left:146px;top:677.63px;font-size:15.2px;line-height:15.2px;color:#1E1E1E;font-family:'Liberation Sans', sans-serif;">:</div>
<div class="t" style="left:161.6px;top:679.10px;font-size:14.87px;line-height:14.87px;color:#1E1E1E;font-family:'Liberation Mono', monospace;">40 ms</div>
<svg style="position:absolute;left:28px;top:933px;" width="7" height="11" viewBox="0 0 7 11"><path d="M6.5 0.5 V10.5 L0.5 5.5 Z" fill="#A0A0A8"/></svg>
<div style="left:43.75px;top:933px;width:368px;height:10.75px;background:#C2C3C9;"></div>
<svg style="position:absolute;left:446px;top:933px;" width="7" height="11" viewBox="0 0 7 11"><path d="M0.5 0.5 V10.5 L6.5 5.5 Z" fill="#A0A0A8"/></svg>
<div style="left:8px;top:948px;width:451px;height:1px;background:#CCCEDB;"></div>
<div style="left:8px;top:948px;width:99.5px;height:25.8px;background:#F5F5F5;border:1px solid #CCCEDB;box-sizing:border-box;border-top:none"></div>
<div class="t" style="left:15.5px;top:955.13px;font-size:14.5px;line-height:14.5px;color:#1C6DB5;font-family:'Liberation Sans', sans-serif;">Test Explorer</div>
<div class="t" style="left:113.7px;top:955.13px;font-size:14.5px;line-height:14.5px;color:#333333;font-family:'Liberation Sans', sans-serif;">Server Explorer</div>
<div class="t" style="left:228.7px;top:955.13px;font-size:14.5px;line-height:14.5px;color:#333333;font-family:'Liberation Sans', sans-serif;">Toolbox</div>
<div class="t" style="left:8.25px;top:984.73px;font-size:14.5px;line-height:14.5px;color:#1E1E1E;font-family:'Liberation Sans', sans-serif;">Package Manager Console</div>
<div class="t" style="left:197px;top:984.73px;font-size:14.5px;line-height:14.5px;color:#1E1E1E;font-family:'Liberation Sans', sans-serif;">Output</div>
<div class="t" style="left:258.75px;top:984.73px;font-size:14.5px;line-height:14.5px;color:#1E1E1E;font-family:'Liberation Sans', sans-serif;">Error List</div>
<div style="left:8.25px;top:1005px;width:173.75px;height:7.5px;background:#CCCEDB;"></div>
<div style="left:197px;top:1005px;width:46px;height:7.5px;background:#CCCEDB;"></div>
<div style="left:258.75px;top:1005px;width:57.25px;height:7.5px;background:#CCCEDB;"></div>
<div class="t" style="left:476.4px;top:134.67px;font-size:14.45px;line-height:14.45px;color:#1E1E1E;font-family:'Liberation Sans', sans-serif;">S1002StringCollectionAssert.cs</div>
<svg style="position:absolute;left:691px;top:135px;" width="11" height="12" viewBox="0 0 11 12"><path d="M3 1.5 H8 V6.3 H3 Z" fill="none" stroke="#424242" stroke-width="1.3"/><path d="M1.2 6.6 H9.8" stroke="#424242" stroke-width="1.3"/><path d="M5.5 6.6 V11" stroke="#424242" stroke-width="1.2"/></svg>
<div style="left:470px;top:156.25px;width:263.4px;height:26px;background:#007ACC;"></div>
<div class="t" style="left:475.5px;top:162.77px;font-size:14.45px;line-height:14.45px;color:#FFFFFF;font-family:'Liberation Sans', sans-serif;">S1002StringCollectionAssert.cs</div>
<svg style="position:absolute;left:690px;top:163px;" width="12" height="11" viewBox="0 0 12 11"><path d="M1 5.5 H5" stroke="#fff" stroke-width="1.2"/><path d="M5.3 1 V10" stroke="#fff" stroke-width="1.3"/><path d="M5.3 2.2 H10.8 V8 H5.3" fill="none" stroke="#fff" stroke-width="1.3"/></svg>
<svg style="position:absolute;left:713.5px;top:163.3px;" width="13" height="11.5" viewBox="0 0 13 11.5"><path d="M1 1 L12 10.5 M12 1 L1 10.5" stroke="#fff" stroke-width="1.5"/></svg>
<svg style="position:absolute;left:1551.5px;top:167.8px;" width="9" height="5" viewBox="0 0 9 5"><path d="M0 0 H9 L4.5 5 Z" fill="#717171"/></svg>
<div style="left:470px;top:181.1px;width:1094px;height:2.2px;background:#007ACC;"></div>
<div style="left:470px;top:183.3px;width:1094px;height:25px;background:#FFFFFF;"></div>
<div style="left:470px;top:208.3px;width:1094px;height:1.2px;background:#CCCEDB;"></div>
<div style="left:1563.5px;top:183.3px;width:1.2px;height:770px;background:#CCCEDB;"></div>
<div style="left:831px;top:183.3px;width:5px;height:25px;background:#E6E7ED;"></div>
<div style="left:1197px;top:183.3px;width:5.5px;height:25px;background:#E6E7ED;"></div>
<svg style="position:absolute;left:474px;top:186px;" width="20" height="18" viewBox="0 0 20 18"><path d="M1.7 11 V1.8 H18.3 V15.5 H14" fill="none" stroke="#424242" stroke-width="1.3"/><rect x="1.2" y="1.2" width="17.1" height="2.8" fill="#424242"/><path d="M2 16.6 L5.2 10 H9.2 L12.4 16.6 Z" fill="#388A34"/><path d="M4.2 5.6 H10 M5.3 5.6 V9.6 L1.6 16.6 H12.8 L9.1 9.6 V5.6" fill="none" stroke="#2E6B2E" stroke-width="1.2" stroke-linejoin="round"/></svg>
<div class="t" style="left:496.7px;top:189.37px;font-size:14.45px;line-height:14.45px;color:#1E1E1E;font-family:'Liberation Sans', sans-serif;">OnlineGame.MSTest</div>
<svg style="position:absolute;left:819.5px;top:194.5px;" width="9" height="5" viewBox="0 0 9 5"><path d="M0 0 H9 L4.5 5 Z" fill="#717171"/></svg>
<svg style="position:absolute;left:838px;top:185px;" width="22" height="22" viewBox="0 0 22 22"><path d="M9.3 2.2 L14 6.9 L9.3 11.6 L4.6 6.9 Z" fill="#DF9424"/><path d="M18 6.8 L20.8 9.6 L18 12.4 L15.2 9.6 Z" fill="#DF9424"/><path d="M18 13.8 L20.8 16.6 L18 19.4 L15.2 16.6 Z" fill="#DF9424"/><path d="M12.5 8.4 H15.5 M12.5 8.4 V15.6 H15.5" fill="none" stroke="#B07A40" stroke-width="1"/></svg>
<div class="t" style="left:862px;top:189.37px;font-size:14.45px;line-height:14.45px;color:#1E1E1E;font-family:'Liberation Sans', sans-serif;">OnlineGame.MSTest.S1002StringCollectionAsser</div>
<svg style="position:absolute;left:1185px;top:194.5px;" width="9" height="5" viewBox="0 0 9 5"><path d="M0 0 H9 L4.5 5 Z" fill="#717171"/></svg>
<svg style="position:absolute;left:1206px;top:188px;" width="13" height="14" viewBox="0 0 13 14"><path d="M6.5 1 L12 4 V10 L6.5 13 L1 10 V4 Z M1 4 L6.5 7 L12 4 M6.5 7 V13" fill="none" stroke="#652D90" stroke-width="1.2"/></svg>
<div class="t" style="left:1228px;top:189.37px;font-size:14.45px;line-height:14.45px;color:#1E1E1E;font-family:'Liberation Sans', sans-serif;">StringCollectionTest()</div>
<svg style="position:absolute;left:1551px;top:194.5px;" width="9" height="5" viewBox="0 0 9 5"><path d="M0 0 H9 L4.5 5 Z" fill="#717171"/></svg>
<div style="left:470px;top:209.5px;width:25px;height:742.5px;background:#E6E7ED;"></div>
<div style="left:495px;top:209.5px;width:1035.5px;height:742.5px;background:#FFFFFF;"></div>
<div style="left:1530.5px;top:209.5px;width:33px;height:742.5px;background:#F5F5F7;"></div>
<div style="left:1530.5px;top:209.5px;width:33px;height:20.7px;background:#F3F3F5;border-bottom:1px solid #D8D8DE;box-sizing:border-box"></div>
<svg style="position:absolute;left:1540px;top:213px;" width="15" height="16" viewBox="0 0 15 16"><path d="M7.5 0.5 V15.5 M4.5 3.5 L7.5 0.5 L10.5 3.5 M4.5 12.5 L7.5 15.5 L10.5 12.5" fill="none" stroke="#1E1E1E" stroke-width="1.3"/><rect x="0.5" y="6.3" width="14" height="1.2" fill="#1E1E1E"/><rect x="0.5" y="8.6" width="14" height="1.2" fill="#1E1E1E"/></svg>
<svg style="position:absolute;left:1540px;top:233.8px;" width="14" height="14" viewBox="0 0 14 14"><circle cx="7" cy="7" r="6.2" fill="#E51400"/><rect x="3.2" y="5.6" width="7.6" height="2.8" fill="#fff"/></svg>
<svg style="position:absolute;left:1542.5px;top:257px;" width="10" height="7" viewBox="0 0 10 7"><path d="M0.5 6.5 L5 0.5 L9.5 6.5 Z" fill="#A0A0A8"/></svg>
<div style="left:1531px;top:275px;width:5.2px;height:629px;background:#6EDB6E;"></div>
<div style="left:1545.3px;top:312.5px;width:6px;height:7px;background:#1E8B1E;"></div>
<div style="left:1552px;top:311px;width:12.5px;height:6px;background:#F5C040;"></div>
<div style="left:1552px;top:311.5px;width:12.5px;height:1.8px;background:#E8A020;"></div>
<div style="left:1552px;top:315px;width:12.5px;height:1.8px;background:#E8A020;"></div>
<div style="left:1552px;top:323.3px;width:12.5px;height:2.3px;background:#F2A516;"></div>
<div style="left:1552px;top:481.5px;width:12px;height:2.2px;background:#1E9B1E;"></div>
<div style="left:1552px;top:485px;width:12px;height:2.2px;background:#1E9B1E;"></div>
<div style="left:1552px;top:493.5px;width:12px;height:2.2px;background:#1E9B1E;"></div>
<div style="left:1551.5px;top:644.5px;width:12.5px;height:2px;background:#F2A516;"></div>
<div style="left:1552px;top:762.5px;width:12px;height:2.2px;background:#1E9B1E;"></div>
<div style="left:1552px;top:767.5px;width:12px;height:2.2px;background:#1E9B1E;"></div>
<div style="left:1536px;top:809px;width:23px;height:45.7px;background:#C2C3C9;"></div>
<div style="left:1545px;top:828px;width:6.4px;height:9px;background:#E51400;"></div>
<div style="left:1551.4px;top:828.5px;width:12.6px;height:2px;background:#E51400;"></div>
<div style="left:1551.4px;top:832.5px;width:12.6px;height:2px;background:#E51400;"></div>
<div style="left:1530.5px;top:834px;width:33.5px;height:2.2px;background:#0000A0;"></div>
<svg style="position:absolute;left:1542.5px;top:936.5px;" width="10" height="7" viewBox="0 0 10 7"><path d="M0.5 0.5 L5 6.5 L9.5 0.5 Z" fill="#A0A0A8"/></svg>
<div style="left:470px;top:209.5px;width:1060.5px;height:742.5px;overflow:hidden">
<div style="position:absolute;left:106px;top:0;width:6.8px;height:743px;background:#6BD66B"></div>
<div style="position:absolute;left:123px;top:0;width:1.8px;height:743px;background:#A5A5A5"></div>
<div style="position:absolute;left:257.20000000000005px;top:358.6px;width:523.8999999999999px;height:25px;background:#99C9EF"></div>
<div style="position:absolute;left:132px;top:383.6px;width:637.8px;height:25.9px;background:#99C9EF"></div>
<div style="position:absolute;left:135.64999999999998px;top:0;width:1.3px;height:743px;background:repeating-linear-gradient(to bottom,#C6C6C6 0 4px,transparent 4px 9px)"></div>
<div style="position:absolute;left:177.69999999999993px;top:0;width:1.3px;height:743px;background:repeating-linear-gradient(to bottom,#C6C6C6 0 4px,transparent 4px 9px)"></div>
<div style="position:absolute;left:218.60000000000002px;top:0;width:1.3px;height:743px;background:repeating-linear-gradient(to bottom,#C6C6C6 0 4px,transparent 4px 9px)"></div>
<div class="t" style="left:70.25px;top:-8.80px;font-family:'Liberation Mono', monospace;font-size:17.414px;line-height:17.414px;color:#2B91AF;-webkit-text-stroke:0.12px #2B91AF">369</div>
<div class="t" style="left:257.40px;top:-8.80px;font-family:'Liberation Mono', monospace;font-size:17.414px;line-height:17.414px;-webkit-text-stroke:0.12px currentColor"><span style="color:#2B91AF;-webkit-text-stroke:0.12px #2B91AF">CollectionAssert</span><span style="color:#000000;-webkit-text-stroke:0.12px #000000">.</span><span style="color:#74531F;-webkit-text-stroke:0.12px #74531F">AllItemsAreUnique</span><span style="color:#000000;-webkit-text-stroke:0.12px #000000">(</span><span style="color:#1F377F;-webkit-text-stroke:0.12px #1F377F">collection2</span><span style="color:#000000;-webkit-text-stroke:0.12px #000000">);    </span><span style="color:#008000;-webkit-text-stroke:0.12px #008000">//Passed</span></div>
<div class="t" style="left:70.25px;top:16.05px;font-family:'Liberation Mono', monospace;font-size:17.414px;line-height:17.414px;color:#2B91AF;-webkit-text-stroke:0.12px #2B91AF">370</div>
<div class="t" style="left:257.40px;top:16.05px;font-family:'Liberation Mono', monospace;font-size:17.414px;line-height:17.414px;-webkit-text-stroke:0.12px currentColor"><span style="color:#2B91AF;-webkit-text-stroke:0.12px #2B91AF">CollectionAssert</span><span style="color:#000000;-webkit-text-stroke:0.12px #000000">.</span><span style="color:#74531F;-webkit-text-stroke:0.12px #74531F">AllItemsAreUnique</span><span style="color:#000000;-webkit-text-stroke:0.12px #000000">(</span><span style="color:#1F377F;-webkit-text-stroke:0.12px #1F377F">collection3</span><span style="color:#000000;-webkit-text-stroke:0.12px #000000">);    </span><span style="color:#008000;-webkit-text-stroke:0.12px #008000">//Passed</span></div>
<div class="t" style="left:70.25px;top:40.90px;font-family:'Liberation Mono', monospace;font-size:17.414px;line-height:17.414px;color:#2B91AF;-webkit-text-stroke:0.12px #2B91AF">371</div>
<div class="t" style="left:257.40px;top:40.90px;font-family:'Liberation Mono', monospace;font-size:17.414px;line-height:17.414px;-webkit-text-stroke:0.12px currentColor"><span style="color:#008000;-webkit-text-stroke:0.12px #008000">//-----------------------------</span></div>
<div class="t" style="left:70.25px;top:65.75px;font-family:'Liberation Mono', monospace;font-size:17.414px;line-height:17.414px;color:#2B91AF;-webkit-text-stroke:0.12px #2B91AF">372</div>
<div class="t" style="left:257.40px;top:65.75px;font-family:'Liberation Mono', monospace;font-size:17.414px;line-height:17.414px;-webkit-text-stroke:0.12px currentColor"><span style="color:#008000;-webkit-text-stroke:0.12px #008000">//9.2.</span></div>
<div class="t" style="left:70.25px;top:90.60px;font-family:'Liberation Mono', monospace;font-size:17.414px;line-height:17.414px;color:#2B91AF;-webkit-text-stroke:0.12px #2B91AF">373</div>
<div class="t" style="left:257.40px;top:90.60px;font-family:'Liberation Mono', monospace;font-size:17.414px;line-height:17.414px;-webkit-text-stroke:0.12px currentColor"><span style="color:#008000;-webkit-text-stroke:0.12px #008000">//FluentAssertion: OnlyHaveUniqueItems()</span></div>
<div class="t" style="left:70.25px;top:115.45px;font-family:'Liberation Mono', monospace;font-size:17.414px;line-height:17.414px;color:#2B91AF;-webkit-text-stroke:0.12px #2B91AF">374</div>
<div class="t" style="left:257.40px;top:115.45px;font-family:'Liberation Mono', monospace;font-size:17.414px;line-height:17.414px;-webkit-text-stroke:0.12px currentColor"><span style="color:#008000;-webkit-text-stroke:0.12px #008000">//collection8NotUnique.Should().OnlyHaveUniqueItems(); //Failed</span></div>
<div class="t" style="left:70.25px;top:140.30px;font-family:'Liberation Mono', monospace;font-size:17.414px;line-height:17.414px;color:#2B91AF;-webkit-text-stroke:0.12px #2B91AF">375</div>
<div class="t" style="left:257.40px;top:140.30px;font-family:'Liberation Mono', monospace;font-size:17.414px;line-height:17.414px;-webkit-text-stroke:0.12px currentColor"><span style="color:#1F377F;-webkit-text-stroke:0.12px #1F377F">collection1</span><span style="color:#000000;-webkit-text-stroke:0.12px #000000">.</span><span style="color:#74531F;-webkit-text-stroke:0.12px #74531F">Should</span><span style="color:#000000;-webkit-text-stroke:0.12px #000000">().</span><span style="color:#74531F;-webkit-text-stroke:0.12px #74531F">OnlyHaveUniqueItems</span><span style="color:#000000;-webkit-text-stroke:0.12px #000000">(); </span><span style="color:#008000;-webkit-text-stroke:0.12px #008000">//Passed</span></div>
<div class="t" style="left:70.25px;top:165.15px;font-family:'Liberation Mono', monospace;font-size:17.414px;line-height:17.414px;color:#2B91AF;-webkit-text-stroke:0.12px #2B91AF">376</div>
<div class="t" style="left:257.40px;top:165.15px;font-family:'Liberation Mono', monospace;font-size:17.414px;line-height:17.414px;-webkit-text-stroke:0.12px currentColor"><span style="color:#1F377F;-webkit-text-stroke:0.12px #1F377F">collection2</span><span style="color:#000000;-webkit-text-stroke:0.12px #000000">.</span><span style="color:#74531F;-webkit-text-stroke:0.12px #74531F">Should</span><span style="color:#000000;-webkit-text-stroke:0.12px #000000">().</span><span style="color:#74531F;-webkit-text-stroke:0.12px #74531F">OnlyHaveUniqueItems</span><span style="color:#000000;-webkit-text-stroke:0.12px #000000">(); </span><span style="color:#008000;-webkit-text-stroke:0.12px #008000">//Passed</span></div>
<div class="t" style="left:70.25px;top:190.00px;font-family:'Liberation Mono', monospace;font-size:17.414px;line-height:17.414px;color:#2B91AF;-webkit-text-stroke:0.12px #2B91AF">377</div>
<div class="t" style="left:257.40px;top:190.00px;font-family:'Liberation Mono', monospace;font-size:17.414px;line-height:17.414px;-webkit-text-stroke:0.12px currentColor"><span style="color:#1F377F;-webkit-text-stroke:0.12px #1F377F">collection3</span><span style="color:#000000;-webkit-text-stroke:0.12px #000000">.</span><span style="color:#74531F;-webkit-text-stroke:0.12px #74531F">Should</span><span style="color:#000000;-webkit-text-stroke:0.12px #000000">().</span><span style="color:#74531F;-webkit-text-stroke:0.12px #74531F">OnlyHaveUniqueItems</span><span style="color:#000000;-webkit-text-stroke:0.12px #000000">(); </span><span style="color:#008000;-webkit-text-stroke:0.12px #008000">//Passed</span></div>
<div class="t" style="left:70.25px;top:214.85px;font-family:'Liberation Mono', monospace;font-size:17.414px;line-height:17.414px;color:#2B91AF;-webkit-text-stroke:0.12px #2B91AF">378</div>
<div class="t" style="left:257.40px;top:214.85px;font-family:'Liberation Mono', monospace;font-size:17.414px;line-height:17.414px;-webkit-text-stroke:0.12px currentColor"><span style="color:#008000;-webkit-text-stroke:0.12px #008000">//------------------------------------</span></div>
<div class="t" style="left:70.25px;top:239.70px;font-family:'Liberation Mono', monospace;font-size:17.414px;line-height:17.414px;color:#2B91AF;-webkit-text-stroke:0.12px #2B91AF">379</div>
<div class="t" style="left:257.40px;top:239.70px;font-family:'Liberation Mono', monospace;font-size:17.414px;line-height:17.414px;-webkit-text-stroke:0.12px currentColor"><span style="color:#008000;-webkit-text-stroke:0.12px #008000">//10.</span></div>
<div class="t" style="left:70.25px;top:264.55px;font-family:'Liberation Mono', monospace;font-size:17.414px;line-height:17.414px;color:#2B91AF;-webkit-text-stroke:0.12px #2B91AF">380</div>
<div class="t" style="left:257.40px;top:264.55px;font-family:'Liberation Mono', monospace;font-size:17.414px;line-height:17.414px;-webkit-text-stroke:0.12px currentColor"><span style="color:#008000;-webkit-text-stroke:0.12px #008000">//Ordered</span></div>
<div class="t" style="left:70.25px;top:289.40px;font-family:'Liberation Mono', monospace;font-size:17.414px;line-height:17.414px;color:#2B91AF;-webkit-text-stroke:0.12px #2B91AF">381</div>
<div class="t" style="left:257.40px;top:289.40px;font-family:'Liberation Mono', monospace;font-size:17.414px;line-height:17.414px;-webkit-text-stroke:0.12px currentColor"><span style="color:#008000;-webkit-text-stroke:0.12px #008000">//-----------------------------</span></div>
<div class="t" style="left:70.25px;top:314.25px;font-family:'Liberation Mono', monospace;font-size:17.414px;line-height:17.414px;color:#2B91AF;-webkit-text-stroke:0.12px #2B91AF">382</div>
<div class="t" style="left:257.40px;top:314.25px;font-family:'Liberation Mono', monospace;font-size:17.414px;line-height:17.414px;-webkit-text-stroke:0.12px currentColor"><span style="color:#008000;-webkit-text-stroke:0.12px #008000">//10.1.</span></div>
<div class="t" style="left:70.25px;top:339.10px;font-family:'Liberation Mono', monospace;font-size:17.414px;line-height:17.414px;color:#2B91AF;-webkit-text-stroke:0.12px #2B91AF">383</div>
<div class="t" style="left:257.40px;top:339.10px;font-family:'Liberation Mono', monospace;font-size:17.414px;line-height:17.414px;-webkit-text-stroke:0.12px currentColor"><span style="color:#008000;-webkit-text-stroke:0.12px #008000">//MSTest&amp;NUnit: IsOrdered()</span></div>
<div class="t" style="left:70.25px;top:363.95px;font-family:'Liberation Mono', monospace;font-size:17.414px;line-height:17.414px;color:#2B91AF;-webkit-text-stroke:0.12px #2B91AF">384</div>
<div class="t" style="left:257.40px;top:363.95px;font-family:'Liberation Mono', monospace;font-size:17.414px;line-height:17.414px;-webkit-text-stroke:0.12px currentColor"><span style="color:#2B91AF;-webkit-text-stroke:0.12px #2B91AF">CollectionAssert</span><span style="color:#000000;-webkit-text-stroke:0.12px #000000">.</span><span style="color:#D21D40;-webkit-text-stroke:0.12px #D21D40">IsOrdered</span><span style="color:#000000;-webkit-text-stroke:0.12px #000000">(</span><span style="color:#1F377F;-webkit-text-stroke:0.12px #1F377F">collection1</span><span style="color:#000000;-webkit-text-stroke:0.12px #000000">); </span><span style="color:#008000;-webkit-text-stroke:0.12px #008000">//Passed</span></div>
<div class="t" style="left:70.25px;top:388.80px;font-family:'Liberation Mono', monospace;font-size:17.414px;line-height:17.414px;color:#2B91AF;-webkit-text-stroke:0.12px #2B91AF">385</div>
<div class="t" style="left:257.40px;top:388.80px;font-family:'Liberation Mono', monospace;font-size:17.414px;line-height:17.414px;-webkit-text-stroke:0.12px currentColor"><span style="color:#2B91AF;-webkit-text-stroke:0.12px #2B91AF">CollectionAssert</span><span style="color:#000000;-webkit-text-stroke:0.12px #000000">.</span><span style="color:#D21D40;-webkit-text-stroke:0.12px #D21D40">IsOrdered</span><span style="color:#000000;-webkit-text-stroke:0.12px #000000">(</span><span style="color:#1F377F;-webkit-text-stroke:0.12px #1F377F">collection2</span><span style="color:#000000;-webkit-text-stroke:0.12px #000000">); </span><span style="color:#008000;-webkit-text-stroke:0.12px #008000">//Passed</span></div>
<div class="t" style="left:70.25px;top:413.65px;font-family:'Liberation Mono', monospace;font-size:17.414px;line-height:17.414px;color:#2B91AF;-webkit-text-stroke:0.12px #2B91AF">386</div>
<div class="t" style="left:257.40px;top:413.65px;font-family:'Liberation Mono', monospace;font-size:17.414px;line-height:17.414px;-webkit-text-stroke:0.12px currentColor"><span style="color:#008000;-webkit-text-stroke:0.12px #008000">//CollectionAssert.IsOrdered(collection9Descend); //Failed</span></div>
<div class="t" style="left:70.25px;top:438.50px;font-family:'Liberation Mono', monospace;font-size:17.414px;line-height:17.414px;color:#2B91AF;-webkit-text-stroke:0.12px #2B91AF">387</div>
<div class="t" style="left:257.40px;top:438.50px;font-family:'Liberation Mono', monospace;font-size:17.414px;line-height:17.414px;-webkit-text-stroke:0.12px currentColor"><span style="color:#008000;-webkit-text-stroke:0.12px #008000">//-----------------------------</span></div>
<div class="t" style="left:70.25px;top:463.35px;font-family:'Liberation Mono', monospace;font-size:17.414px;line-height:17.414px;color:#2B91AF;-webkit-text-stroke:0.12px #2B91AF">388</div>
<div class="t" style="left:257.40px;top:463.35px;font-family:'Liberation Mono', monospace;font-size:17.414px;line-height:17.414px;-webkit-text-stroke:0.12px currentColor"><span style="color:#008000;-webkit-text-stroke:0.12px #008000">//10.2.</span></div>
<div class="t" style="left:70.25px;top:488.20px;font-family:'Liberation Mono', monospace;font-size:17.414px;line-height:17.414px;color:#2B91AF;-webkit-text-stroke:0.12px #2B91AF">389</div>
<div class="t" style="left:257.40px;top:488.20px;font-family:'Liberation Mono', monospace;font-size:17.414px;line-height:17.414px;-webkit-text-stroke:0.12px currentColor"><span style="color:#008000;-webkit-text-stroke:0.12px #008000">//FluentAssertion: BeInAscendingOrder(), BeInDescendingOrder()</span></div>
<div class="t" style="left:70.25px;top:513.05px;font-family:'Liberation Mono', monospace;font-size:17.414px;line-height:17.414px;color:#2B91AF;-webkit-text-stroke:0.12px #2B91AF">390</div>
<div class="t" style="left:257.40px;top:513.05px;font-family:'Liberation Mono', monospace;font-size:17.414px;line-height:17.414px;-webkit-text-stroke:0.12px currentColor"><span style="color:#1F377F;-webkit-text-stroke:0.12px #1F377F">collection1</span><span style="color:#000000;-webkit-text-stroke:0.12px #000000">.</span><span style="color:#74531F;-webkit-text-stroke:0.12px #74531F">Should</span><span style="color:#000000;-webkit-text-stroke:0.12px #000000">().</span><span style="color:#74531F;-webkit-text-stroke:0.12px #74531F">BeInAscendingOrder</span><span style="color:#000000;-webkit-text-stroke:0.12px #000000">(); </span><span style="color:#008000;-webkit-text-stroke:0.12px #008000">//Passed</span></div>
<div class="t" style="left:70.25px;top:537.90px;font-family:'Liberation Mono', monospace;font-size:17.414px;line-height:17.414px;color:#2B91AF;-webkit-text-stroke:0.12px #2B91AF">391</div>
<div class="t" style="left:257.40px;top:537.90px;font-family:'Liberation Mono', monospace;font-size:17.414px;line-height:17.414px;-webkit-text-stroke:0.12px currentColor"><span style="color:#008000;-webkit-text-stroke:0.12px #008000">//collection9Descend.Should().BeInAscendingOrder(); //Failed</span></div>
<div class="t" style="left:70.25px;top:562.75px;font-family:'Liberation Mono', monospace;font-size:17.414px;line-height:17.414px;color:#2B91AF;-webkit-text-stroke:0.12px #2B91AF">392</div>
<div class="t" style="left:257.40px;top:562.75px;font-family:'Liberation Mono', monospace;font-size:17.414px;line-height:17.414px;-webkit-text-stroke:0.12px currentColor"><span style="color:#008000;-webkit-text-stroke:0.12px #008000">//collection1.Should().BeInDescendingOrder(); //Failed</span></div>
<div class="t" style="left:70.25px;top:587.60px;font-family:'Liberation Mono', monospace;font-size:17.414px;line-height:17.414px;color:#2B91AF;-webkit-text-stroke:0.12px #2B91AF">393</div>
<div class="t" style="left:257.40px;top:587.60px;font-family:'Liberation Mono', monospace;font-size:17.414px;line-height:17.414px;-webkit-text-stroke:0.12px currentColor"><span style="color:#1F377F;-webkit-text-stroke:0.12px #1F377F">collection9Descend</span><span style="color:#000000;-webkit-text-stroke:0.12px #000000">.</span><span style="color:#74531F;-webkit-text-stroke:0.12px #74531F">Should</span><span style="color:#000000;-webkit-text-stroke:0.12px #000000">().</span><span style="color:#74531F;-webkit-text-stroke:0.12px #74531F">BeInDescendingOrder</span><span style="color:#000000;-webkit-text-stroke:0.12px #000000">(); </span><span style="color:#008000;-webkit-text-stroke:0.12px #008000">//Passed</span></div>
<div class="t" style="left:70.25px;top:612.45px;font-family:'Liberation Mono', monospace;font-size:17.414px;line-height:17.414px;color:#2B91AF;-webkit-text-stroke:0.12px #2B91AF">394</div>
<div class="t" style="left:257.40px;top:612.45px;font-family:'Liberation Mono', monospace;font-size:17.414px;line-height:17.414px;-webkit-text-stroke:0.12px currentColor"><span style="color:#008000;-webkit-text-stroke:0.12px #008000">//------------------------------------</span></div>
<div class="t" style="left:70.25px;top:637.30px;font-family:'Liberation Mono', monospace;font-size:17.414px;line-height:17.414px;color:#2B91AF;-webkit-text-stroke:0.12px #2B91AF">395</div>
<div class="t" style="left:257.40px;top:637.30px;font-family:'Liberation Mono', monospace;font-size:17.414px;line-height:17.414px;-webkit-text-stroke:0.12px currentColor"><span style="color:#008000;-webkit-text-stroke:0.12px #008000">//11.</span></div>
<div class="t" style="left:70.25px;top:662.15px;font-family:'Liberation Mono', monospace;font-size:17.414px;line-height:17.414px;color:#2B91AF;-webkit-text-stroke:0.12px #2B91AF">396</div>
<div class="t" style="left:257.40px;top:662.15px;font-family:'Liberation Mono', monospace;font-size:17.414px;line-height:17.414px;-webkit-text-stroke:0.12px currentColor"><span style="color:#008000;-webkit-text-stroke:0.12px #008000">//BeTypeOf</span></div>
<div class="t" style="left:70.25px;top:687.00px;font-family:'Liberation Mono', monospace;font-size:17.414px;line-height:17.414px;color:#2B91AF;-webkit-text-stroke:0.12px #2B91AF">397</div>
<div class="t" style="left:257.40px;top:687.00px;font-family:'Liberation Mono', monospace;font-size:17.414px;line-height:17.414px;-webkit-text-stroke:0.12px currentColor"><span style="color:#008000;-webkit-text-stroke:0.12px #008000">//-----------------------------</span></div>
<div class="t" style="left:70.25px;top:711.85px;font-family:'Liberation Mono', monospace;font-size:17.414px;line-height:17.414px;color:#2B91AF;-webkit-text-stroke:0.12px #2B91AF">398</div>
<div class="t" style="left:257.40px;top:711.85px;font-family:'Liberation Mono', monospace;font-size:17.414px;line-height:17.414px;-webkit-text-stroke:0.12px currentColor"><span style="color:#008000;-webkit-text-stroke:0.12px #008000">//11.1.</span></div>
<div class="t" style="left:70.25px;top:736.70px;font-family:'Liberation Mono', monospace;font-size:17.414px;line-height:17.414px;color:#2B91AF;-webkit-text-stroke:0.12px #2B91AF">399</div>
<div class="t" style="left:257.40px;top:736.70px;font-family:'Liberation Mono', monospace;font-size:17.414px;line-height:17.414px;-webkit-text-stroke:0.12px currentColor"><span style="color:#008000;-webkit-text-stroke:0.12px #008000">//MSTest&amp;NUnit : AllItemsAreInstancesOfType&lt;T&gt;()</span></div>
<svg style="position:absolute;left:436.00px;top:379.10px" width="92.0" height="6"><path d="M0 3.8 Q2.80 -0.6 5.60 3.8 Q8.40 5.4 11.20 3.8 Q14.00 -0.6 16.80 3.8 Q19.60 5.4 22.40 3.8 Q25.20 -0.6 28.00 3.8 Q30.80 5.4 33.60 3.8 Q36.40 -0.6 39.20 3.8 Q42.00 5.4 44.80 3.8 Q47.60 -0.6 50.40 3.8 Q53.20 5.4 56.00 3.8 Q58.80 -0.6 61.60 3.8 Q64.40 5.4 67.20 3.8 Q70.00 -0.6 72.80 3.8 Q75.60 5.4 78.40 3.8 Q81.20 -0.6 84.00 3.8 Q86.80 5.4 89.60 3.8" fill="none" stroke="#E03A50" stroke-width="1.3"/></svg>
<svg style="position:absolute;left:436.00px;top:403.95px" width="92.0" height="6"><path d="M0 3.8 Q2.80 -0.6 5.60 3.8 Q8.40 5.4 11.20 3.8 Q14.00 -0.6 16.80 3.8 Q19.60 5.4 22.40 3.8 Q25.20 -0.6 28.00 3.8 Q30.80 5.4 33.60 3.8 Q36.40 -0.6 39.20 3.8 Q42.00 5.4 44.80 3.8 Q47.60 -0.6 50.40 3.8 Q53.20 5.4 56.00 3.8 Q58.80 -0.6 61.60 3.8 Q64.40 5.4 67.20 3.8 Q70.00 -0.6 72.80 3.8 Q75.60 5.4 78.40 3.8 Q81.20 -0.6 84.00 3.8 Q86.80 5.4 89.60 3.8" fill="none" stroke="#E03A50" stroke-width="1.3"/></svg>
<svg style="position:absolute;left:20px;top:380.5px" width="30" height="30"><rect x="15.1" y="4" width="4" height="8.3" fill="#1E1E1E"/><path d="M8.1 17.8 Q8.1 12 13 10.8 L13.6 13.2 H20.6 L21.2 10.8 Q26.7 12 26.7 17.8 Z" fill="#1E1E1E"/><path d="M9.7 19.8 V24 M12.7 19.8 V24 M15.7 19.8 V24 M18.7 19.8 V24 M21.7 19.8 V24 M24.7 19.8 V24" stroke="#1E1E1E" stroke-width="1.9"/></svg>
</div>
<svg style="position:absolute;left:1262px;top:598px;" width="9" height="18" viewBox="0 0 9 18"><path d="M1 1.4 H3.3 Q4.5 1.4 4.5 2.6 V14.8 Q4.5 16 3.3 16 H1 M8 1.4 H5.7 Q4.5 1.4 4.5 2.6 M8 16 H5.7 Q4.5 16 4.5 14.8" fill="none" stroke="#000" stroke-width="1.3"/></svg>
<div style="left:470px;top:952px;width:1094px;height:21px;background:#F5F5F5;"></div>
<div style="left:470px;top:972.5px;width:1094.7px;height:1.2px;background:#CCCEDB;"></div>
<div style="left:470px;top:952px;width:75px;height:21px;background:#FFFFFF;border:1px solid #CCCEDB;box-sizing:border-box;"></div>
<div class="t" style="left:473px;top:956.57px;font-size:13.5px;line-height:13.5px;color:#1E1E1E;font-family:'Liberation Sans', sans-serif;">117 %</div>
<svg style="position:absolute;left:533.5px;top:960px;" width="9" height="5" viewBox="0 0 9 5"><path d="M0 0 H9 L4.5 5 Z" fill="#717171"/></svg>
<svg style="position:absolute;left:578px;top:955px;" width="15" height="15" viewBox="0 0 15 15"><circle cx="7.5" cy="7.5" r="7" fill="#E51400"/><path d="M4.5 4.5 L10.5 10.5 M10.5 4.5 L4.5 10.5" stroke="#fff" stroke-width="2.2"/></svg>
<div class="t" style="left:599px;top:956.57px;font-size:13.5px;line-height:13.5px;color:#1E1E1E;font-family:'Liberation Sans', sans-serif;">2</div>
<svg style="position:absolute;left:635px;top:954px;" width="16" height="15" viewBox="0 0 16 15"><path d="M8 0.8 L15.5 14.2 H0.5 Z" fill="#F4C60E" stroke="#F4C60E" stroke-linejoin="round"/><rect x="7.1" y="4.5" width="1.8" height="5.5" fill="#1E1E1E"/><rect x="7.1" y="11" width="1.8" height="1.8" fill="#1E1E1E"/></svg>
<div class="t" style="left:656.7px;top:956.57px;font-size:13.5px;line-height:13.5px;color:#1E1E1E;font-family:'Liberation Sans', sans-serif;">1</div>
<svg style="position:absolute;left:703px;top:956px;" width="15" height="12" viewBox="0 0 15 12"><path d="M14 6 H2.5 M7 1.5 L2 6 L7 10.5" fill="none" stroke="#1E6BB8" stroke-width="2"/></svg>
<svg style="position:absolute;left:739px;top:956px;" width="15" height="12" viewBox="0 0 15 12"><path d="M1 6 H12.5 M8 1.5 L13 6 L8 10.5" fill="none" stroke="#1E6BB8" stroke-width="2"/></svg>
<div style="left:773px;top:955px;width:1px;height:16px;background:#CCCEDB;"></div>
<svg style="position:absolute;left:791px;top:953px;" width="16" height="17" viewBox="0 0 16 17"><path d="M9 1 L14 4.5 L8 12 L3 8.5 Z" fill="#7A7A7A"/><path d="M3 8.5 L8 12 L5.5 15.5 L1 12.5 Z" fill="#A8A8A8"/><path d="M10 1 L12 -1" stroke="#424242"/></svg>
<svg style="position:absolute;left:813px;top:959px;" width="8" height="5" viewBox="0 0 8 5"><path d="M0 0 H8 L4 5 Z" fill="#1E1E1E"/></svg>
<div style="left:1573px;top:129px;width:340px;height:820px;background:#F5F5F5;border:1px solid #CCCEDB;box-sizing:border-box;"></div>
<div style="left:1574px;top:130px;width:338px;height:61px;background:#EEEEF2;"></div>
<div class="t" style="left:1578.75px;top:137.23px;font-size:14.5px;line-height:14.5px;color:#1E1E1E;font-family:'Liberation Sans', sans-serif;">Solution Explorer</div>
<svg style="position:absolute;left:1701px;top:140px;" width="138" height="5" viewBox="0 0 138 5"><rect x="0" y="0" width="1" height="1" fill="#A8A8B0"/><rect x="2" y="2" width="1" height="1" fill="#A8A8B0"/><rect x="0" y="4" width="1" height="1" fill="#A8A8B0"/><rect x="4" y="0" width="1" height="1" fill="#A8A8B0"/><rect x="6" y="2" width="1" height="1" fill="#A8A8B0"/><rect x="4" y="4" width="1" height="1" fill="#A8A8B0"/><rect x="8" y="0" width="1" height="1" fill="#A8A8B0"/><rect x="10" y="2" width="1" height="1" fill="#A8A8B0"/><rect x="8" y="4" width="1" height="1" fill="#A8A8B0"/><rect x="12" y="0" width="1" height="1" fill="#A8A8B0"/><rect x="14" y="2" width="1" height="1" fill="#A8A8B0"/><rect x="12" y="4" width="1" height="1" fill="#A8A8B0"/><rect x="16" y="0" width="1" height="1" fill="#A8A8B0"/><rect x="18" y="2" width="1" height="1" fill="#A8A8B0"/><rect x="16" y="4" width="1" height="1" fill="#A8A8B0"/><rect x="20" y="0" width="1" height="1" fill="#A8A8B0"/><rect x="22" y="2" width="1" height="1" fill="#A8A8B0"/><rect x="20" y="4" width="1" height="1" fill="#A8A8B0"/><rect x="24" y="0" width="1" height="1" fill="#A8A8B0"/><rect x="26" y="2" width="1" height="1" fill="#A8A8B0"/><rect x="24" y="4" width="1" height="1" fill="#A8A8B0"/><rect x="28" y="0" width="1" height="1" fill="#A8A8B0"/><rect x="30" y="2" width="1" height="1" fill="#A8A8B0"/><rect x="28" y="4" width="1" height="1" fill="#A8A8B0"/><rect x="32" y="0" width="1" height="1" fill="#A8A8B0"/><rect x="34" y="2" width="1" height="1" fill="#A8A8B0"/><rect x="32" y="4" width="1" height="1" fill="#A8A8B0"/><rect x="36" y="0" width="1" height="1" fill="#A8A8B0"/><rect x="38" y="2" width="1" height="1" fill="#A8A8B0"/><rect x="36" y="4" width="1" height="1" fill="#A8A8B0"/><rect x="40" y="0" width="1" height="1" fill="#A8A8B0"/><rect x="42" y="2" width="1" height="1" fill="#A8A8B0"/><rect x="40" y="4" width="1" height="1" fill="#A8A8B0"/><rect x="44" y="0" width="1" height="1" fill="#A8A8B0"/><rect x="46" y="2" width="1" height="1" fill="#A8A8B0"/><rect x="44" y="4" width="1" height="1" fill="#A8A8B0"/><rect x="48" y="0" width="1" height="1" fill="#A8A8B0"/><rect x="50" y="2" width="1" height="1" fill="#A8A8B0"/><rect x="48" y="4" width="1" height="1" fill="#A8A8B0"/><rect x="52" y="0" width="1" height="1" fill="#A8A8B0"/><rect x="54" y="2" width="1" height="1" fill="#A8A8B0"/><rect x="52" y="4" width="1" height="1" fill="#A8A8B0"/><rect x="56" y="0" width="1" height="1" fill="#A8A8B0"/><rect x="58" y="2" width="1" height="1" fill="#A8A8B0"/><rect x="56" y="4" width="1" height="1" fill="#A8A8B0"/><rect x="60" y="0" width="1" height="1" fill="#A8A8B0"/><rect x="62" y="2" width="1" height="1" fill="#A8A8B0"/><rect x="60" y="4" width="1" height="1" fill="#A8A8B0"/><rect x="64" y="0" width="1" height="1" fill="#A8A8B0"/><rect x="66" y="2" width="1" height="1" fill="#A8A8B0"/><rect x="64" y="4" width="1" height="1" fill="#A8A8B0"/><rect x="68" y="0" width="1" height="1" fill="#A8A8B0"/><rect x="70" y="2" width="1" height="1" fill="#A8A8B0"/><rect x="68" y="4" width="1" height="1" fill="#A8A8B0"/><rect x="72" y="0" width="1" height="1" fill="#A8A8B0"/><rect x="74" y="2" width="1" height="1" fill="#A8A8B0"/><rect x="72" y="4" width="1" height="1" fill="#A8A8B0"/><rect x="76" y="0" width="1" height="1" fill="#A8A8B0"/><rect x="78" y="2" width="1" height="1" fill="#A8A8B0"/><rect x="76" y="4" width="1" height="1" fill="#A8A8B0"/><rect x="80" y="0" width="1" height="1" fill="#A8A8B0"/><rect x="82" y="2" width="1" height="1" fill="#A8A8B0"/><rect x="80" y="4" width="1" height="1" fill="#A8A8B0"/><rect x="84" y="0" width="1" height="1" fill="#A8A8B0"/><rect x="86" y="2" width="1" height="1" fill="#A8A8B0"/><rect x="84" y="4" width="1" height="1" fill="#A8A8B0"/><rect x="88" y="0" width="1" height="1" fill="#A8A8B0"/><rect x="90" y="2" width="1" height="1" fill="#A8A8B0"/><rect x="88" y="4" width="1" height="1" fill="#A8A8B0"/><rect x="92" y="0" width="1" height="1" fill="#A8A8B0"/><rect x="94" y="2" width="1" height="1" fill="#A8A8B0"/><rect x="92" y="4" width="1" height="1" fill="#A8A8B0"/><rect x="96" y="0" width="1" height="1" fill="#A8A8B0"/><rect x="98" y="2" width="1" height="1" fill="#A8A8B0"/><rect x="96" y="4" width="1" height="1" fill="#A8A8B0"/><rect x="100" y="0" width="1" height="1" fill="#A8A8B0"/><rect x="102" y="2" width="1" height="1" fill="#A8A8B0"/><rect x="100" y="4" width="1" height="1" fill="#A8A8B0"/><rect x="104" y="0" width="1" height="1" fill="#A8A8B0"/><rect x="106" y="2" width="1" height="1" fill="#A8A8B0"/><rect x="104" y="4" width="1" height="1" fill="#A8A8B0"/><rect x="108" y="0" width="1" height="1" fill="#A8A8B0"/><rect x="110" y="2" width="1" height="1" fill="#A8A8B0"/><rect x="108" y="4" width="1" height="1" fill="#A8A8B0"/><rect x="112" y="0" width="1" height="1" fill="#A8A8B0"/><rect x="114" y="2" width="1" height="1" fill="#A8A8B0"/><rect x="112" y="4" width="1" height="1" fill="#A8A8B0"/><rect x="116" y="0" width="1" height="1" fill="#A8A8B0"/><rect x="118" y="2" width="1" height="1" fill="#A8A8B0"/><rect x="116" y="4" width="1" height="1" fill="#A8A8B0"/><rect x="120" y="0" width="1" height="1" fill="#A8A8B0"/><rect x="122" y="2" width="1" height="1" fill="#A8A8B0"/><rect x="120" y="4" width="1" height="1" fill="#A8A8B0"/><rect x="124" y="0" width="1" height="1" fill="#A8A8B0"/><rect x="126" y="2" width="1" height="1" fill="#A8A8B0"/><rect x="124" y="4" width="1" height="1" fill="#A8A8B0"/><rect x="128" y="0" width="1" height="1" fill="#A8A8B0"/><rect x="130" y="2" width="1" height="1" fill="#A8A8B0"/><rect x="128" y="4" width="1" height="1" fill="#A8A8B0"/><rect x="132" y="0" width="1" height="1" fill="#A8A8B0"/><rect x="134" y="2" width="1" height="1" fill="#A8A8B0"/><rect x="132" y="4" width="1" height="1" fill="#A8A8B0"/><rect x="136" y="0" width="1" height="1" fill="#A8A8B0"/><rect x="138" y="2" width="1" height="1" fill="#A8A8B0"/><rect x="136" y="4" width="1" height="1" fill="#A8A8B0"/></svg>
<svg style="position:absolute;left:1850px;top:139px;" width="11" height="7" viewBox="0 0 11 7"><path d="M0.5 0.5 H10.5 L5.5 6 Z" fill="#1E1E1E"/></svg>
<svg style="position:absolute;left:1870px;top:136px;" width="10" height="15" viewBox="0 0 10 15"><path d="M2.6 1.2 H7.8 V8.4" fill="none" stroke="#1E1E1E" stroke-width="1.6"/><rect x="1.9" y="1" width="2.2" height="8" fill="#1E1E1E"/><rect x="0.5" y="8.2" width="9" height="1.7" fill="#1E1E1E"/><rect x="4.4" y="9.5" width="1.4" height="5" fill="#1E1E1E"/></svg>
<svg style="position:absolute;left:1891px;top:137px;" width="12" height="12" viewBox="0 0 12 12"><path d="M1 1 L11 11 M11 1 L1 11" stroke="#1E1E1E" stroke-width="1.5"/></svg>
<svg style="position:absolute;left:1583.5px;top:166px;" width="16" height="16" viewBox="0 0 16 16"><circle cx="8" cy="8" r="7" fill="none" stroke="#C8C8C8" stroke-width="1.8"/><path d="M11.5 8 H4.5 M7.5 4.5 L4 8 L7.5 11.5" fill="none" stroke="#C8C8C8" stroke-width="1.8"/></svg>
<svg style="position:absolute;left:1610.5px;top:166px;" width="16" height="16" viewBox="0 0 16 16"><circle cx="8" cy="8" r="7" fill="none" stroke="#C8C8C8" stroke-width="1.8"/><path d="M4.5 8 H11.5 M8.5 4.5 L12 8 L8.5 11.5" fill="none" stroke="#C8C8C8" stroke-width="1.8"/></svg>
<svg style="position:absolute;left:1636px;top:164px;" width="19" height="19" viewBox="0 0 19 19"><path d="M1 9.5 L9.5 1.5 L18 9.5" fill="none" stroke="#424242" stroke-width="1.6"/><path d="M3.5 8 V18 H15.5 V8" fill="none" stroke="#424242" stroke-width="1.6"/><rect x="7.5" y="11.5" width="4" height="6.5" fill="#424242"/></svg>
<svg style="position:absolute;left:1664px;top:164px;" width="20" height="19" viewBox="0 0 20 19"><rect x="1" y="7" width="11" height="10" fill="none" stroke="#424242" stroke-width="1.6"/><rect x="9" y="2" width="9" height="9" fill="#DCB67A"/><path d="M4 5 V2 H8 M6 0 L8 2 L6 4" fill="none" stroke="#1E6BB8" stroke-width="1.3"/><path d="M16 13 V17 H12 M14 15 L12 17 L14 19" fill="none" stroke="#1E6BB8" stroke-width="1.3"/></svg>
<svg style="position:absolute;left:1691.0px;top:172px;" width="7" height="4" viewBox="0 0 7 4"><path d="M0 0 H7 L3.5 4 Z" fill="#717171"/></svg>
<div style="left:1706px;top:162px;width:1px;height:25px;background:#CCCEDB;"></div>
<svg style="position:absolute;left:1718px;top:164px;" width="20" height="20" viewBox="0 0 20 20"><path d="M1 1 L6 1 L1 6 Z" fill="#424242"/><circle cx="11" cy="12" r="6.5" fill="none" stroke="#424242" stroke-width="1.6"/><path d="M11 8 V12.5 H14" fill="none" stroke="#424242" stroke-width="1.4"/></svg>
<svg style="position:absolute;left:1742.5px;top:172px;" width="7" height="4" viewBox="0 0 7 4"><path d="M0 0 H7 L3.5 4 Z" fill="#717171"/></svg>
<svg style="position:absolute;left:1758px;top:164px;" width="18" height="19" viewBox="0 0 18 19"><path d="M14.5 10 A6 6 0 1 1 10 4" fill="none" stroke="#1E6BB8" stroke-width="2.2"/><path d="M8.5 0 L14 4 L8.5 8 Z" fill="#1E6BB8"/></svg>
<svg style="position:absolute;left:1785px;top:165px;" width="19" height="17" viewBox="0 0 19 17"><rect x="1" y="6" width="10" height="10" fill="none" stroke="#424242" stroke-width="1.5"/><path d="M4 6 V3 H14 V13 H11 M7 3 V0.8 H17 V10 H14" fill="none" stroke="#424242" stroke-width="1.5"/><rect x="3" y="10" width="6" height="1.5" fill="#424242"/></svg>
<svg style="position:absolute;left:1811px;top:164px;" width="19" height="20" viewBox="0 0 19 20"><path d="M1 4 H5 M1 4 V18 H5" fill="none" stroke="#424242" stroke-width="1.5"/><path d="M5 1 H13 L17 5 V19 H5 Z" fill="none" stroke="#424242" stroke-width="1.5"/><path d="M8 9 H14 M8 12 H14 M8 15 H14" stroke="#424242" stroke-width="1.3"/></svg>
<div style="left:1839px;top:162px;width:1px;height:25px;background:#CCCEDB;"></div>
<svg style="position:absolute;left:1849px;top:167px;" width="18" height="13" viewBox="0 0 18 13"><path d="M6 1 L1 6.5 L6 12 M12 1 L17 6.5 L12 12" fill="none" stroke="#1E1E1E" stroke-width="1.6"/></svg>
<svg style="position:absolute;left:1902px;top:162px;" width="9" height="6" viewBox="0 0 9 6"><path d="M0.5 0.5 L3 2.75 L0.5 5 Z M5 0.5 L7.5 2.75 L5 5 Z" fill="#999999"/></svg>
<div style="left:1574px;top:191px;width:338px;height:1px;background:#CCCEDB;"></div>
<div style="left:1574px;top:192px;width:338px;height:25px;background:#FFFFFF;"></div>
<div style="left:1574px;top:217px;width:338px;height:1px;background:#CCCEDB;"></div>
<div class="t" style="left:1580.5px;top:199.03px;font-size:14.5px;line-height:14.5px;color:#717171;font-family:'Liberation Sans', sans-serif;">Search Solution Explorer (Ctrl+;)</div>
<svg style="position:absolute;left:1876px;top:196px;" width="18" height="17" viewBox="0 0 18 17"><circle cx="11.5" cy="6" r="4.5" fill="none" stroke="#717171" stroke-width="2"/><path d="M8.3 9.3 L2.5 15" stroke="#717171" stroke-width="2.8" stroke-linecap="round"/></svg>
<svg style="position:absolute;left:1900.25px;top:202.5px;" width="7" height="4" viewBox="0 0 7 4"><path d="M0 0 H7 L3.5 4 Z" fill="#717171"/></svg>
<svg style="position:absolute;left:1896.5px;top:228px;" width="11" height="7" viewBox="0 0 11 7"><path d="M0.5 6.5 L5.5 0.5 L10.5 6.5 Z" fill="#A0A0A8"/></svg>
<div style="left:1896.6px;top:508px;width:9.8px;height:398.7px;background:#C2C3C9;"></div>
<svg style="position:absolute;left:1896px;top:913px;" width="11" height="7" viewBox="0 0 11 7"><path d="M0.5 0.5 L5.5 6.5 L10.5 0.5 Z" fill="#A0A0A8"/></svg>
<div style="left:1574px;top:218px;width:317px;height:710px;overflow:hidden">
<svg style="position:absolute;left:13.299999999999955px;top:10.5px" width="9" height="9"><path d="M8 0.5 V8 H0.5 Z" fill="#1E1E1E"/></svg>
<svg style="position:absolute;left:39.5px;top:6.5px" width="18" height="16"><path d="M1.5 2.5 Q1.5 1 3 1 H7 L8.5 2.8 H15.5 Q17 2.8 17 4.3 V14.5 H1.5 Z" fill="#DCB67A"/><path d="M4.5 5 H15.5 V9 H4.5 Z" fill="#F3EEE4"/><path d="M1.5 14.5 L4 8.5 H17 V14.5 Z" fill="#E2BF87"/></svg>
<div class="t" style="left:64.40px;top:7.93px;font-size:14.5px;line-height:14.5px;color:#1E1E1E;font-family:'Liberation Sans', sans-serif">Test</div>
<svg style="position:absolute;left:35.799999999999955px;top:33.5px" width="9" height="9"><path d="M8 0.5 V8 H0.5 Z" fill="#1E1E1E"/></svg>
<svg style="position:absolute;left:52px;top:31.5px" width="8" height="9"><path d="M1 4.5 L3 7.5 L7 1" fill="none" stroke="#E51400" stroke-width="1.6"/></svg>
<svg style="position:absolute;left:59.5px;top:28.5px" width="20" height="18"><path d="M1.7 11 V1.8 H18.3 V15.5 H14" fill="none" stroke="#424242" stroke-width="1.3"/><rect x="1.2" y="1.2" width="17.1" height="2.8" fill="#424242"/><path d="M2 16.6 L5.2 10 H9.2 L12.4 16.6 Z" fill="#388A34"/><path d="M4.2 5.6 H10 M5.3 5.6 V9.6 L1.6 16.6 H12.8 L9.1 9.6 V5.6" fill="none" stroke="#2E6B2E" stroke-width="1.2" stroke-linejoin="round"/></svg>
<div class="t" style="left:86.40px;top:30.93px;font-size:14.5px;line-height:14.5px;color:#1E1E1E;font-family:'Liberation Sans', sans-serif">OnlineGame.MSTest</div>
<svg style="position:absolute;left:58.299999999999955px;top:55.0px" width="8" height="11"><path d="M1.2 1.2 L6.8 5.5 L1.2 9.8 Z" fill="none" stroke="#1E1E1E" stroke-width="1.3"/></svg>
<svg style="position:absolute;left:74.70000000000005px;top:56.5px" width="8" height="9"><path d="M1.8 4.8 V3.6 Q1.8 1.6 4 1.6 Q6.2 1.6 6.2 3.6 V4.8" fill="none" stroke="#3CA8E0" stroke-width="1"/><rect x="0.4" y="4.6" width="7.2" height="4.3" fill="#3CA8E0"/><rect x="3.4" y="5.6" width="1.2" height="2" fill="#E8F4FB"/></svg>
<svg style="position:absolute;left:84px;top:51.5px" width="18" height="18"><path d="M2.2 15.8 L9.5 8.5" stroke="#424242" stroke-width="3.3" stroke-linecap="round"/><path d="M8 10 A5.6 5.6 0 0 1 13.5 1.8 L11.6 5 L13.2 6.8 L16.3 4.6 A5.6 5.6 0 0 1 8 10 Z" fill="#424242"/></svg>
<div class="t" style="left:109.40px;top:53.93px;font-size:14.5px;line-height:14.5px;color:#1E1E1E;font-family:'Liberation Sans', sans-serif">Properties</div>
<svg style="position:absolute;left:58.299999999999955px;top:78.0px" width="8" height="11"><path d="M1.2 1.2 L6.8 5.5 L1.2 9.8 Z" fill="none" stroke="#1E1E1E" stroke-width="1.3"/></svg>
<svg style="position:absolute;left:84px;top:78.5px" width="19" height="10"><rect x="0.5" y="2" width="5" height="5" fill="#424242"/><rect x="10" y="0.5" width="8" height="8.5" fill="#424242"/><rect x="6" y="4" width="3" height="1.3" fill="#424242"/></svg>
<div class="t" style="left:109.40px;top:76.93px;font-size:14.5px;line-height:14.5px;color:#1E1E1E;font-family:'Liberation Sans', sans-serif">References</div>
<svg style="position:absolute;left:74.70000000000005px;top:102.5px" width="8" height="9"><path d="M1.8 4.8 V3.6 Q1.8 1.6 4 1.6 Q6.2 1.6 6.2 3.6 V4.8" fill="none" stroke="#3CA8E0" stroke-width="1"/><rect x="0.4" y="4.6" width="7.2" height="4.3" fill="#3CA8E0"/><rect x="3.4" y="5.6" width="1.2" height="2" fill="#E8F4FB"/></svg>
<svg style="position:absolute;left:84px;top:97.5px" width="18" height="19"><path d="M3.5 6.5 V1.2 H10.8 L16.6 7 V17.8 H7" fill="none" stroke="#424242" stroke-width="1.3"/><path d="M10.8 1.2 V7 H16.6" fill="none" stroke="#424242" stroke-width="1"/><circle cx="4.2" cy="9" r="3.6" fill="#424242"/><rect x="3.4" y="5" width="1.6" height="2.6" fill="#F5F5F5"/><rect x="3.2" y="11" width="2" height="7.5" fill="#424242"/></svg>
<div class="t" style="left:109.40px;top:99.93px;font-size:14.5px;line-height:14.5px;color:#1E1E1E;font-family:'Liberation Sans', sans-serif">packages.config</div>
<svg style="position:absolute;left:58.299999999999955px;top:124.0px" width="8" height="11"><path d="M1.2 1.2 L6.8 5.5 L1.2 9.8 Z" fill="none" stroke="#1E1E1E" stroke-width="1.3"/></svg>
<svg style="position:absolute;left:74.70000000000005px;top:125.5px" width="8" height="9"><path d="M1.8 4.8 V3.6 Q1.8 1.6 4 1.6 Q6.2 1.6 6.2 3.6 V4.8" fill="none" stroke="#3CA8E0" stroke-width="1"/><rect x="0.4" y="4.6" width="7.2" height="4.3" fill="#3CA8E0"/><rect x="3.4" y="5.6" width="1.2" height="2" fill="#E8F4FB"/></svg>
<div class="t" style="left:86.59999999999991px;top:124.2px;font-family:'Liberation Sans', sans-serif;font-size:11.5px;line-height:12px;font-weight:bold;color:#388A34">C<span style="font-size:8.5px;position:relative;top:-2.2px;margin-left:0.6px">#</span></div>
<div class="t" style="left:109.40px;top:122.93px;font-size:14.5px;line-height:14.5px;color:#1E1E1E;font-family:'Liberation Sans', sans-serif">S01BasicAssertion.cs</div>
<svg style="position:absolute;left:58.299999999999955px;top:147.0px" width="8" height="11"><path d="M1.2 1.2 L6.8 5.5 L1.2 9.8 Z" fill="none" stroke="#1E1E1E" stroke-width="1.3"/></svg>
<svg style="position:absolute;left:74.70000000000005px;top:148.5px" width="8" height="9"><path d="M1.8 4.8 V3.6 Q1.8 1.6 4 1.6 Q6.2 1.6 6.2 3.6 V4.8" fill="none" stroke="#3CA8E0" stroke-width="1"/><rect x="0.4" y="4.6" width="7.2" height="4.3" fill="#3CA8E0"/><rect x="3.4" y="5.6" width="1.2" height="2" fill="#E8F4FB"/></svg>
<div class="t" style="left:86.59999999999991px;top:147.2px;font-family:'Liberation Sans', sans-serif;font-size:11.5px;line-height:12px;font-weight:bold;color:#388A34">C<span style="font-size:8.5px;position:relative;top:-2.2px;margin-left:0.6px">#</span></div>
<div class="t" style="left:109.40px;top:145.93px;font-size:14.5px;line-height:14.5px;color:#1E1E1E;font-family:'Liberation Sans', sans-serif">S02AssertionScope.cs</div>
<svg style="position:absolute;left:58.299999999999955px;top:170.0px" width="8" height="11"><path d="M1.2 1.2 L6.8 5.5 L1.2 9.8 Z" fill="none" stroke="#1E1E1E" stroke-width="1.3"/></svg>
<svg style="position:absolute;left:74.70000000000005px;top:171.5px" width="8" height="9"><path d="M1.8 4.8 V3.6 Q1.8 1.6 4 1.6 Q6.2 1.6 6.2 3.6 V4.8" fill="none" stroke="#3CA8E0" stroke-width="1"/><rect x="0.4" y="4.6" width="7.2" height="4.3" fill="#3CA8E0"/><rect x="3.4" y="5.6" width="1.2" height="2" fill="#E8F4FB"/></svg>
<div class="t" style="left:86.59999999999991px;top:170.2px;font-family:'Liberation Sans', sans-serif;font-size:11.5px;line-height:12px;font-weight:bold;color:#388A34">C<span style="font-size:8.5px;position:relative;top:-2.2px;margin-left:0.6px">#</span></div>
<div class="t" style="left:109.40px;top:168.93px;font-size:14.5px;line-height:14.5px;color:#1E1E1E;font-family:'Liberation Sans', sans-serif">S03StringAssertion.cs</div>
<svg style="position:absolute;left:58.299999999999955px;top:193.0px" width="8" height="11"><path d="M1.2 1.2 L6.8 5.5 L1.2 9.8 Z" fill="none" stroke="#1E1E1E" stroke-width="1.3"/></svg>
<svg style="position:absolute;left:74.70000000000005px;top:194.5px" width="8" height="9"><path d="M1.8 4.8 V3.6 Q1.8 1.6 4 1.6 Q6.2 1.6 6.2 3.6 V4.8" fill="none" stroke="#3CA8E0" stroke-width="1"/><rect x="0.4" y="4.6" width="7.2" height="4.3" fill="#3CA8E0"/><rect x="3.4" y="5.6" width="1.2" height="2" fill="#E8F4FB"/></svg>
<div class="t" style="left:86.59999999999991px;top:193.2px;font-family:'Liberation Sans', sans-serif;font-size:11.5px;line-height:12px;font-weight:bold;color:#388A34">C<span style="font-size:8.5px;position:relative;top:-2.2px;margin-left:0.6px">#</span></div>
<div class="t" style="left:109.40px;top:191.93px;font-size:14.5px;line-height:14.5px;color:#1E1E1E;font-family:'Liberation Sans', sans-serif">S05DateTimeAssertion.cs</div>
<svg style="position:absolute;left:58.299999999999955px;top:216.0px" width="8" height="11"><path d="M1.2 1.2 L6.8 5.5 L1.2 9.8 Z" fill="none" stroke="#1E1E1E" stroke-width="1.3"/></svg>
<svg style="position:absolute;left:74.70000000000005px;top:217.5px" width="8" height="9"><path d="M1.8 4.8 V3.6 Q1.8 1.6 4 1.6 Q6.2 1.6 6.2 3.6 V4.8" fill="none" stroke="#3CA8E0" stroke-width="1"/><rect x="0.4" y="4.6" width="7.2" height="4.3" fill="#3CA8E0"/><rect x="3.4" y="5.6" width="1.2" height="2" fill="#E8F4FB"/></svg>
<div class="t" style="left:86.59999999999991px;top:216.2px;font-family:'Liberation Sans', sans-serif;font-size:11.5px;line-height:12px;font-weight:bold;color:#388A34">C<span style="font-size:8.5px;position:relative;top:-2.2px;margin-left:0.6px">#</span></div>
<div class="t" style="left:109.40px;top:214.93px;font-size:14.5px;line-height:14.5px;color:#1E1E1E;font-family:'Liberation Sans', sans-serif">S06TypeMethodPropertyAssembl</div>
<svg style="position:absolute;left:58.299999999999955px;top:239.0px" width="8" height="11"><path d="M1.2 1.2 L6.8 5.5 L1.2 9.8 Z" fill="none" stroke="#1E1E1E" stroke-width="1.3"/></svg>
<svg style="position:absolute;left:74.70000000000005px;top:240.5px" width="8" height="9"><path d="M1.8 4.8 V3.6 Q1.8 1.6 4 1.6 Q6.2 1.6 6.2 3.6 V4.8" fill="none" stroke="#3CA8E0" stroke-width="1"/><rect x="0.4" y="4.6" width="7.2" height="4.3" fill="#3CA8E0"/><rect x="3.4" y="5.6" width="1.2" height="2" fill="#E8F4FB"/></svg>
<div class="t" style="left:86.59999999999991px;top:239.2px;font-family:'Liberation Sans', sans-serif;font-size:11.5px;line-height:12px;font-weight:bold;color:#388A34">C<span style="font-size:8.5px;position:relative;top:-2.2px;margin-left:0.6px">#</span></div>
<div class="t" style="left:109.40px;top:237.93px;font-size:14.5px;line-height:14.5px;color:#1E1E1E;font-family:'Liberation Sans', sans-serif">S07ActionThreadTask.cs</div>
<svg style="position:absolute;left:58.299999999999955px;top:262.0px" width="8" height="11"><path d="M1.2 1.2 L6.8 5.5 L1.2 9.8 Z" fill="none" stroke="#1E1E1E" stroke-width="1.3"/></svg>
<svg style="position:absolute;left:74.70000000000005px;top:263.5px" width="8" height="9"><path d="M1.8 4.8 V3.6 Q1.8 1.6 4 1.6 Q6.2 1.6 6.2 3.6 V4.8" fill="none" stroke="#3CA8E0" stroke-width="1"/><rect x="0.4" y="4.6" width="7.2" height="4.3" fill="#3CA8E0"/><rect x="3.4" y="5.6" width="1.2" height="2" fill="#E8F4FB"/></svg>
<div class="t" style="left:86.59999999999991px;top:262.2px;font-family:'Liberation Sans', sans-serif;font-size:11.5px;line-height:12px;font-weight:bold;color:#388A34">C<span style="font-size:8.5px;position:relative;top:-2.2px;margin-left:0.6px">#</span></div>
<div class="t" style="left:109.40px;top:260.93px;font-size:14.5px;line-height:14.5px;color:#1E1E1E;font-family:'Liberation Sans', sans-serif">S08TypeNullableBoolean.cs</div>
<svg style="position:absolute;left:58.299999999999955px;top:285.0px" width="8" height="11"><path d="M1.2 1.2 L6.8 5.5 L1.2 9.8 Z" fill="none" stroke="#1E1E1E" stroke-width="1.3"/></svg>
<svg style="position:absolute;left:74.70000000000005px;top:286.5px" width="8" height="9"><path d="M1.8 4.8 V3.6 Q1.8 1.6 4 1.6 Q6.2 1.6 6.2 3.6 V4.8" fill="none" stroke="#3CA8E0" stroke-width="1"/><rect x="0.4" y="4.6" width="7.2" height="4.3" fill="#3CA8E0"/><rect x="3.4" y="5.6" width="1.2" height="2" fill="#E8F4FB"/></svg>
<div class="t" style="left:86.59999999999991px;top:285.2px;font-family:'Liberation Sans', sans-serif;font-size:11.5px;line-height:12px;font-weight:bold;color:#388A34">C<span style="font-size:8.5px;position:relative;top:-2.2px;margin-left:0.6px">#</span></div>
<div class="t" style="left:109.40px;top:283.93px;font-size:14.5px;line-height:14.5px;color:#1E1E1E;font-family:'Liberation Sans', sans-serif">S09GuidEnum.cs</div>
<svg style="position:absolute;left:58.299999999999955px;top:308.0px" width="8" height="11"><path d="M1.2 1.2 L6.8 5.5 L1.2 9.8 Z" fill="none" stroke="#1E1E1E" stroke-width="1.3"/></svg>
<svg style="position:absolute;left:74.70000000000005px;top:309.5px" width="8" height="9"><path d="M1.8 4.8 V3.6 Q1.8 1.6 4 1.6 Q6.2 1.6 6.2 3.6 V4.8" fill="none" stroke="#3CA8E0" stroke-width="1"/><rect x="0.4" y="4.6" width="7.2" height="4.3" fill="#3CA8E0"/><rect x="3.4" y="5.6" width="1.2" height="2" fill="#E8F4FB"/></svg>
<div class="t" style="left:86.59999999999991px;top:308.2px;font-family:'Liberation Sans', sans-serif;font-size:11.5px;line-height:12px;font-weight:bold;color:#388A34">C<span style="font-size:8.5px;position:relative;top:-2.2px;margin-left:0.6px">#</span></div>
<div class="t" style="left:109.40px;top:306.93px;font-size:14.5px;line-height:14.5px;color:#1E1E1E;font-family:'Liberation Sans', sans-serif">S1001IntCollectionAssert.cs</div>
<div style="position:absolute;left:0;top:324.4px;width:316.79999999999995px;height:23.3px;background:#CCCEDB"></div>
<svg style="position:absolute;left:58.299999999999955px;top:331.0px" width="8" height="11"><path d="M1.2 1.2 L6.8 5.5 L1.2 9.8 Z" fill="none" stroke="#1E1E1E" stroke-width="1.3"/></svg>
<svg style="position:absolute;left:74.70000000000005px;top:331.5px" width="8" height="11"><path d="M4 3 V10 M0.5 6.5 H7.5" stroke="#388A34" stroke-width="1.5"/></svg>
<div class="t" style="left:86.59999999999991px;top:331.2px;font-family:'Liberation Sans', sans-serif;font-size:11.5px;line-height:12px;font-weight:bold;color:#388A34">C<span style="font-size:8.5px;position:relative;top:-2.2px;margin-left:0.6px">#</span></div>
<div class="t" style="left:109.40px;top:329.93px;font-size:14.5px;line-height:14.5px;color:#1E1E1E;font-family:'Liberation Sans', sans-serif">S1002StringCollectionAssert.cs</div>
<svg style="position:absolute;left:35.799999999999955px;top:355.5px" width="9" height="9"><path d="M8 0.5 V8 H0.5 Z" fill="#1E1E1E"/></svg>
<svg style="position:absolute;left:52px;top:353.5px" width="8" height="9"><path d="M1 4.5 L3 7.5 L7 1" fill="none" stroke="#E51400" stroke-width="1.6"/></svg>
<svg style="position:absolute;left:60px;top:350.5px" width="19" height="18"><rect x="1" y="1" width="17" height="16" fill="none" stroke="#388A34" stroke-width="1.3"/><text x="9.5" y="13" font-family="Liberation Sans" font-size="10" font-weight="bold" fill="#424242" text-anchor="middle">C#</text></svg>
<div class="t" style="left:86.40px;top:352.93px;font-size:14.5px;line-height:14.5px;color:#1E1E1E;font-family:'Liberation Sans', sans-serif">OnlineGame.NUnit</div>
<svg style="position:absolute;left:58.299999999999955px;top:377.0px" width="8" height="11"><path d="M1.2 1.2 L6.8 5.5 L1.2 9.8 Z" fill="none" stroke="#1E1E1E" stroke-width="1.3"/></svg>
<svg style="position:absolute;left:74.70000000000005px;top:378.5px" width="8" height="9"><path d="M1.8 4.8 V3.6 Q1.8 1.6 4 1.6 Q6.2 1.6 6.2 3.6 V4.8" fill="none" stroke="#3CA8E0" stroke-width="1"/><rect x="0.4" y="4.6" width="7.2" height="4.3" fill="#3CA8E0"/><rect x="3.4" y="5.6" width="1.2" height="2" fill="#E8F4FB"/></svg>
<svg style="position:absolute;left:84px;top:373.5px" width="18" height="18"><path d="M2.2 15.8 L9.5 8.5" stroke="#424242" stroke-width="3.3" stroke-linecap="round"/><path d="M8 10 A5.6 5.6 0 0 1 13.5 1.8 L11.6 5 L13.2 6.8 L16.3 4.6 A5.6 5.6 0 0 1 8 10 Z" fill="#424242"/></svg>
<div class="t" style="left:109.40px;top:375.93px;font-size:14.5px;line-height:14.5px;color:#1E1E1E;font-family:'Liberation Sans', sans-serif">Properties</div>
<svg style="position:absolute;left:58.299999999999955px;top:400.0px" width="8" height="11"><path d="M1.2 1.2 L6.8 5.5 L1.2 9.8 Z" fill="none" stroke="#1E1E1E" stroke-width="1.3"/></svg>
<svg style="position:absolute;left:84px;top:400.5px" width="19" height="10"><rect x="0.5" y="2" width="5" height="5" fill="#424242"/><rect x="10" y="0.5" width="8" height="8.5" fill="#424242"/><rect x="6" y="4" width="3" height="1.3" fill="#424242"/></svg>
<div class="t" style="left:109.40px;top:398.93px;font-size:14.5px;line-height:14.5px;color:#1E1E1E;font-family:'Liberation Sans', sans-serif">References</div>
<svg style="position:absolute;left:74.70000000000005px;top:424.5px" width="8" height="9"><path d="M1.8 4.8 V3.6 Q1.8 1.6 4 1.6 Q6.2 1.6 6.2 3.6 V4.8" fill="none" stroke="#3CA8E0" stroke-width="1"/><rect x="0.4" y="4.6" width="7.2" height="4.3" fill="#3CA8E0"/><rect x="3.4" y="5.6" width="1.2" height="2" fill="#E8F4FB"/></svg>
<svg style="position:absolute;left:84px;top:419.5px" width="18" height="19"><path d="M3.5 6.5 V1.2 H10.8 L16.6 7 V17.8 H7" fill="none" stroke="#424242" stroke-width="1.3"/><path d="M10.8 1.2 V7 H16.6" fill="none" stroke="#424242" stroke-width="1"/><circle cx="4.2" cy="9" r="3.6" fill="#424242"/><rect x="3.4" y="5" width="1.6" height="2.6" fill="#F5F5F5"/><rect x="3.2" y="11" width="2" height="7.5" fill="#424242"/></svg>
<div class="t" style="left:109.40px;top:421.93px;font-size:14.5px;line-height:14.5px;color:#1E1E1E;font-family:'Liberation Sans', sans-serif">packages.config</div>
<svg style="position:absolute;left:58.299999999999955px;top:446.0px" width="8" height="11"><path d="M1.2 1.2 L6.8 5.5 L1.2 9.8 Z" fill="none" stroke="#1E1E1E" stroke-width="1.3"/></svg>
<svg style="position:absolute;left:74.70000000000005px;top:447.5px" width="8" height="9"><path d="M1.8 4.8 V3.6 Q1.8 1.6 4 1.6 Q6.2 1.6 6.2 3.6 V4.8" fill="none" stroke="#3CA8E0" stroke-width="1"/><rect x="0.4" y="4.6" width="7.2" height="4.3" fill="#3CA8E0"/><rect x="3.4" y="5.6" width="1.2" height="2" fill="#E8F4FB"/></svg>
<div class="t" style="left:86.59999999999991px;top:446.2px;font-family:'Liberation Sans', sans-serif;font-size:11.5px;line-height:12px;font-weight:bold;color:#388A34">C<span style="font-size:8.5px;position:relative;top:-2.2px;margin-left:0.6px">#</span></div>
<div class="t" style="left:109.40px;top:444.93px;font-size:14.5px;line-height:14.5px;color:#1E1E1E;font-family:'Liberation Sans', sans-serif">S01BasicAssertion.cs</div>
<svg style="position:absolute;left:58.299999999999955px;top:469.0px" width="8" height="11"><path d="M1.2 1.2 L6.8 5.5 L1.2 9.8 Z" fill="none" stroke="#1E1E1E" stroke-width="1.3"/></svg>
<svg style="position:absolute;left:74.70000000000005px;top:470.5px" width="8" height="9"><path d="M1.8 4.8 V3.6 Q1.8 1.6 4 1.6 Q6.2 1.6 6.2 3.6 V4.8" fill="none" stroke="#3CA8E0" stroke-width="1"/><rect x="0.4" y="4.6" width="7.2" height="4.3" fill="#3CA8E0"/><rect x="3.4" y="5.6" width="1.2" height="2" fill="#E8F4FB"/></svg>
<div class="t" style="left:86.59999999999991px;top:469.2px;font-family:'Liberation Sans', sans-serif;font-size:11.5px;line-height:12px;font-weight:bold;color:#388A34">C<span style="font-size:8.5px;position:relative;top:-2.2px;margin-left:0.6px">#</span></div>
<div class="t" style="left:109.40px;top:467.93px;font-size:14.5px;line-height:14.5px;color:#1E1E1E;font-family:'Liberation Sans', sans-serif">S02AssertionScope.cs</div>
<svg style="position:absolute;left:58.299999999999955px;top:492.0px" width="8" height="11"><path d="M1.2 1.2 L6.8 5.5 L1.2 9.8 Z" fill="none" stroke="#1E1E1E" stroke-width="1.3"/></svg>
<svg style="position:absolute;left:74.70000000000005px;top:493.5px" width="8" height="9"><path d="M1.8 4.8 V3.6 Q1.8 1.6 4 1.6 Q6.2 1.6 6.2 3.6 V4.8" fill="none" stroke="#3CA8E0" stroke-width="1"/><rect x="0.4" y="4.6" width="7.2" height="4.3" fill="#3CA8E0"/><rect x="3.4" y="5.6" width="1.2" height="2" fill="#E8F4FB"/></svg>
<div class="t" style="left:86.59999999999991px;top:492.2px;font-family:'Liberation Sans', sans-serif;font-size:11.5px;line-height:12px;font-weight:bold;color:#388A34">C<span style="font-size:8.5px;position:relative;top:-2.2px;margin-left:0.6px">#</span></div>
<div class="t" style="left:109.40px;top:490.93px;font-size:14.5px;line-height:14.5px;color:#1E1E1E;font-family:'Liberation Sans', sans-serif">S03StringAssertion.cs</div>
<svg style="position:absolute;left:58.299999999999955px;top:515.0px" width="8" height="11"><path d="M1.2 1.2 L6.8 5.5 L1.2 9.8 Z" fill="none" stroke="#1E1E1E" stroke-width="1.3"/></svg>
<svg style="position:absolute;left:74.70000000000005px;top:516.5px" width="8" height="9"><path d="M1.8 4.8 V3.6 Q1.8 1.6 4 1.6 Q6.2 1.6 6.2 3.6 V4.8" fill="none" stroke="#3CA8E0" stroke-width="1"/><rect x="0.4" y="4.6" width="7.2" height="4.3" fill="#3CA8E0"/><rect x="3.4" y="5.6" width="1.2" height="2" fill="#E8F4FB"/></svg>
<div class="t" style="left:86.59999999999991px;top:515.2px;font-family:'Liberation Sans', sans-serif;font-size:11.5px;line-height:12px;font-weight:bold;color:#388A34">C<span style="font-size:8.5px;position:relative;top:-2.2px;margin-left:0.6px">#</span></div>
<div class="t" style="left:109.40px;top:513.93px;font-size:14.5px;line-height:14.5px;color:#1E1E1E;font-family:'Liberation Sans', sans-serif">S04NumericIComparableAssertion.cs</div>
<svg style="position:absolute;left:58.299999999999955px;top:538.0px" width="8" height="11"><path d="M1.2 1.2 L6.8 5.5 L1.2 9.8 Z" fill="none" stroke="#1E1E1E" stroke-width="1.3"/></svg>
<svg style="position:absolute;left:74.70000000000005px;top:539.5px" width="8" height="9"><path d="M1.8 4.8 V3.6 Q1.8 1.6 4 1.6 Q6.2 1.6 6.2 3.6 V4.8" fill="none" stroke="#3CA8E0" stroke-width="1"/><rect x="0.4" y="4.6" width="7.2" height="4.3" fill="#3CA8E0"/><rect x="3.4" y="5.6" width="1.2" height="2" fill="#E8F4FB"/></svg>
<div class="t" style="left:86.59999999999991px;top:538.2px;font-family:'Liberation Sans', sans-serif;font-size:11.5px;line-height:12px;font-weight:bold;color:#388A34">C<span style="font-size:8.5px;position:relative;top:-2.2px;margin-left:0.6px">#</span></div>
<div class="t" style="left:109.40px;top:536.93px;font-size:14.5px;line-height:14.5px;color:#1E1E1E;font-family:'Liberation Sans', sans-serif">S05DateTimeAssertion.cs</div>
<svg style="position:absolute;left:58.299999999999955px;top:561.0px" width="8" height="11"><path d="M1.2 1.2 L6.8 5.5 L1.2 9.8 Z" fill="none" stroke="#1E1E1E" stroke-width="1.3"/></svg>
<svg style="position:absolute;left:74.70000000000005px;top:562.5px" width="8" height="9"><path d="M1.8 4.8 V3.6 Q1.8 1.6 4 1.6 Q6.2 1.6 6.2 3.6 V4.8" fill="none" stroke="#3CA8E0" stroke-width="1"/><rect x="0.4" y="4.6" width="7.2" height="4.3" fill="#3CA8E0"/><rect x="3.4" y="5.6" width="1.2" height="2" fill="#E8F4FB"/></svg>
<div class="t" style="left:86.59999999999991px;top:561.2px;font-family:'Liberation Sans', sans-serif;font-size:11.5px;line-height:12px;font-weight:bold;color:#388A34">C<span style="font-size:8.5px;position:relative;top:-2.2px;margin-left:0.6px">#</span></div>
<div class="t" style="left:109.40px;top:559.93px;font-size:14.5px;line-height:14.5px;color:#1E1E1E;font-family:'Liberation Sans', sans-serif">S06TypeMethodPropertyAssembly.cs</div>
<svg style="position:absolute;left:58.299999999999955px;top:584.0px" width="8" height="11"><path d="M1.2 1.2 L6.8 5.5 L1.2 9.8 Z" fill="none" stroke="#1E1E1E" stroke-width="1.3"/></svg>
<svg style="position:absolute;left:74.70000000000005px;top:585.5px" width="8" height="9"><path d="M1.8 4.8 V3.6 Q1.8 1.6 4 1.6 Q6.2 1.6 6.2 3.6 V4.8" fill="none" stroke="#3CA8E0" stroke-width="1"/><rect x="0.4" y="4.6" width="7.2" height="4.3" fill="#3CA8E0"/><rect x="3.4" y="5.6" width="1.2" height="2" fill="#E8F4FB"/></svg>
<div class="t" style="left:86.59999999999991px;top:584.2px;font-family:'Liberation Sans', sans-serif;font-size:11.5px;line-height:12px;font-weight:bold;color:#388A34">C<span style="font-size:8.5px;position:relative;top:-2.2px;margin-left:0.6px">#</span></div>
<div class="t" style="left:109.40px;top:582.93px;font-size:14.5px;line-height:14.5px;color:#1E1E1E;font-family:'Liberation Sans', sans-serif">S07ActionThreadTask.cs</div>
<svg style="position:absolute;left:58.299999999999955px;top:607.0px" width="8" height="11"><path d="M1.2 1.2 L6.8 5.5 L1.2 9.8 Z" fill="none" stroke="#1E1E1E" stroke-width="1.3"/></svg>
<svg style="position:absolute;left:74.70000000000005px;top:608.5px" width="8" height="9"><path d="M1.8 4.8 V3.6 Q1.8 1.6 4 1.6 Q6.2 1.6 6.2 3.6 V4.8" fill="none" stroke="#3CA8E0" stroke-width="1"/><rect x="0.4" y="4.6" width="7.2" height="4.3" fill="#3CA8E0"/><rect x="3.4" y="5.6" width="1.2" height="2" fill="#E8F4FB"/></svg>
<div class="t" style="left:86.59999999999991px;top:607.2px;font-family:'Liberation Sans', sans-serif;font-size:11.5px;line-height:12px;font-weight:bold;color:#388A34">C<span style="font-size:8.5px;position:relative;top:-2.2px;margin-left:0.6px">#</span></div>
<div class="t" style="left:109.40px;top:605.93px;font-size:14.5px;line-height:14.5px;color:#1E1E1E;font-family:'Liberation Sans', sans-serif">S08TypeNullableBoolean.cs</div>
<svg style="position:absolute;left:58.299999999999955px;top:630.0px" width="8" height="11"><path d="M1.2 1.2 L6.8 5.5 L1.2 9.8 Z" fill="none" stroke="#1E1E1E" stroke-width="1.3"/></svg>
<svg style="position:absolute;left:74.70000000000005px;top:631.5px" width="8" height="9"><path d="M1.8 4.8 V3.6 Q1.8 1.6 4 1.6 Q6.2 1.6 6.2 3.6 V4.8" fill="none" stroke="#3CA8E0" stroke-width="1"/><rect x="0.4" y="4.6" width="7.2" height="4.3" fill="#3CA8E0"/><rect x="3.4" y="5.6" width="1.2" height="2" fill="#E8F4FB"/></svg>
<div class="t" style="left:86.59999999999991px;top:630.2px;font-family:'Liberation Sans', sans-serif;font-size:11.5px;line-height:12px;font-weight:bold;color:#388A34">C<span style="font-size:8.5px;position:relative;top:-2.2px;margin-left:0.6px">#</span></div>
<div class="t" style="left:109.40px;top:628.93px;font-size:14.5px;line-height:14.5px;color:#1E1E1E;font-family:'Liberation Sans', sans-serif">S09GuidEnum.cs</div>
<svg style="position:absolute;left:58.299999999999955px;top:653.0px" width="8" height="11"><path d="M1.2 1.2 L6.8 5.5 L1.2 9.8 Z" fill="none" stroke="#1E1E1E" stroke-width="1.3"/></svg>
<svg style="position:absolute;left:74.70000000000005px;top:654.5px" width="8" height="9"><path d="M1.8 4.8 V3.6 Q1.8 1.6 4 1.6 Q6.2 1.6 6.2 3.6 V4.8" fill="none" stroke="#3CA8E0" stroke-width="1"/><rect x="0.4" y="4.6" width="7.2" height="4.3" fill="#3CA8E0"/><rect x="3.4" y="5.6" width="1.2" height="2" fill="#E8F4FB"/></svg>
<div class="t" style="left:86.59999999999991px;top:653.2px;font-family:'Liberation Sans', sans-serif;font-size:11.5px;line-height:12px;font-weight:bold;color:#388A34">C<span style="font-size:8.5px;position:relative;top:-2.2px;margin-left:0.6px">#</span></div>
<div class="t" style="left:109.40px;top:651.93px;font-size:14.5px;line-height:14.5px;color:#1E1E1E;font-family:'Liberation Sans', sans-serif">S1001IntCollectionAssert.cs</div>
<svg style="position:absolute;left:58.299999999999955px;top:676.0px" width="8" height="11"><path d="M1.2 1.2 L6.8 5.5 L1.2 9.8 Z" fill="none" stroke="#1E1E1E" stroke-width="1.3"/></svg>
<svg style="position:absolute;left:74.70000000000005px;top:676.5px" width="8" height="11"><path d="M4 3 V10 M0.5 6.5 H7.5" stroke="#388A34" stroke-width="1.5"/></svg>
<div class="t" style="left:86.59999999999991px;top:676.2px;font-family:'Liberation Sans', sans-serif;font-size:11.5px;line-height:12px;font-weight:bold;color:#388A34">C<span style="font-size:8.5px;position:relative;top:-2.2px;margin-left:0.6px">#</span></div>
<div class="t" style="left:109.40px;top:674.93px;font-size:14.5px;line-height:14.5px;color:#1E1E1E;font-family:'Liberation Sans', sans-serif">S1002StringCollectionAssert.cs</div>
</div>
<svg style="position:absolute;left:1582px;top:933px;" width="7" height="11" viewBox="0 0 7 11"><path d="M6.5 0.5 V10.5 L0.5 5.5 Z" fill="#A0A0A8"/></svg>
<div style="left:1595px;top:933px;width:208px;height:10.75px;background:#C2C3C9;"></div>
<svg style="position:absolute;left:1878px;top:933px;" width="7" height="11" viewBox="0 0 7 11"><path d="M0.5 0.5 V10.5 L6.5 5.5 Z" fill="#A0A0A8"/></svg>
<div style="left:1740.6px;top:948px;width:85.1px;height:25.8px;background:#F5F5F5;border:1px solid #CCCEDB;box-sizing:border-box;border-top:none"></div>
<div class="t" style="left:1579.7px;top:955.13px;font-size:14.5px;line-height:14.5px;color:#333333;font-family:'Liberation Sans', sans-serif;">Unit Test...</div>
<div class="t" style="left:1666px;top:955.13px;font-size:14.5px;line-height:14.5px;color:#333333;font-family:'Liberation Sans', sans-serif;">Properties</div>
<div class="t" style="left:1747px;top:955.13px;font-size:14.5px;line-height:14.5px;color:#1C6DB5;font-family:'Liberation Sans', sans-serif;">Solution...</div>
<div class="t" style="left:1833.7px;top:955.13px;font-size:14.5px;line-height:14.5px;color:#333333;font-family:'Liberation Sans', sans-serif;">Team Ex...</div>
<svg style="position:absolute;left:5px;top:1019px;" width="21" height="17" viewBox="0 0 21 17"><path d="M5 1.5 H20 L16 15.5 H1 Z" fill="none" stroke="#fff" stroke-width="1.5"/></svg>
<div class="t" style="left:35px;top:1021.43px;font-size:14.5px;line-height:14.5px;color:#FFFFFF;font-family:'Liberation Sans', sans-serif;">Ready</div>
<svg style="position:absolute;left:1208px;top:1020px;" width="13" height="16" viewBox="0 0 13 16"><path d="M6.5 15 V2.5 M1.5 7.5 L6.5 2 L11.5 7.5" fill="none" stroke="#fff" stroke-width="2"/></svg>
<div class="t" style="left:1231.8px;top:1021.73px;font-size:14.5px;line-height:14.5px;color:#FFFFFF;font-family:'Liberation Sans', sans-serif;">0</div>
<svg style="position:absolute;left:1269px;top:1020px;" width="16" height="16" viewBox="0 0 16 16"><path d="M2 14 L3 10 L11 2 L14 5 L6 13 Z" fill="#fff"/></svg>
<div class="t" style="left:1293.4px;top:1021.73px;font-size:14.5px;line-height:14.5px;color:#FFFFFF;font-family:'Liberation Sans', sans-serif;">4</div>
<svg style="position:absolute;left:1329px;top:1019px;" width="19" height="19" viewBox="0 0 19 19"><path d="M9.5 1 L18 9.5 L9.5 18 L1 9.5 Z" fill="#fff"/><circle cx="7" cy="7" r="1.6" fill="#007ACC"/><circle cx="12" cy="12" r="1.6" fill="#007ACC"/><path d="M7 7 L12 12" stroke="#007ACC" stroke-width="1.3"/></svg>
<div class="t" style="left:1356px;top:1021.73px;font-size:14.5px;line-height:14.5px;color:#FFFFFF;font-family:'Liberation Sans', sans-serif;">KL01</div>
<svg style="position:absolute;left:1415px;top:1019px;" width="19" height="18" viewBox="0 0 19 18"><circle cx="3" cy="3" r="2" fill="#fff"/><circle cx="16" cy="3" r="2" fill="#fff"/><path d="M3 3 L9.5 10 L16 3 M9.5 10 V17" fill="none" stroke="#fff" stroke-width="2.2"/></svg>
<div class="t" style="left:1442px;top:1021.73px;font-size:14.5px;line-height:14.5px;color:#FFFFFF;font-family:'Liberation Sans', sans-serif;">KL/04B_NUnit_KL/00_Main</div>
<svg style="position:absolute;left:1623.5px;top:1025px;" width="11" height="6" viewBox="0 0 11 6"><path d="M0 6 L5.5 0 L11 6 Z" fill="#fff"/></svg>
<svg style="position:absolute;left:1665px;top:1017px;" width="28" height="24" viewBox="0 0 28 24"><path d="M2 15 Q4 13 4 9 Q4 3 9.5 3 Q15 3 15 9 Q15 13 17 15 Z" fill="#D9D9DE"/><circle cx="9.5" cy="17" r="2" fill="#D9D9DE"/><circle cx="19.5" cy="16" r="7" fill="#E51400"/><text x="19.5" y="20.5" font-family="Liberation Sans" font-size="12" fill="#fff" text-anchor="middle">4</text></svg>
<svg style="position:absolute;left:1719px;top:1018px;" width="18" height="20" viewBox="0 0 18 20"><path d="M4 8 H16 L13 15 H7 L2 19 L3 15 H1 Z" fill="none" stroke="#fff" stroke-width="1.4" stroke-linejoin="round"/><rect x="7.5" y="1" width="4" height="10" fill="#F2A516"/><rect x="5" y="9" width="6" height="3.5" fill="#F2A516"/></svg>
<svg style="position:absolute;left:1755px;top:1015.5px;" width="25" height="25" viewBox="0 0 25 25"><circle cx="11" cy="11" r="10" fill="#E8E8EA" stroke="#fff" stroke-width="1.3"/><circle cx="11" cy="11" r="9" fill="none" stroke="#3A3A3A" stroke-width="0.8"/><circle cx="19" cy="19" r="4.6" fill="#1E1E1E" stroke="#fff" stroke-width="1"/><path d="M19 16.2 A2.8 2.8 0 0 1 19 21.8 Z" fill="#fff"/></svg>
<div class="t" style="left:1783.6px;top:1021.73px;font-size:14.5px;line-height:14.5px;color:#D2CBF2;font-family:'Liberation Sans', sans-serif;">2 errors in 1 file</div>
<svg style="position:absolute;left:1893px;top:1016.5px;" width="24" height="24" viewBox="0 0 24 24"><circle cx="11.6" cy="11.7" r="11.4" fill="#fff"/><circle cx="11.6" cy="11.7" r="9.6" fill="#E51400"/><rect x="5.4" y="9.9" width="12.4" height="3.6" fill="#fff"/></svg>
</body></html>
